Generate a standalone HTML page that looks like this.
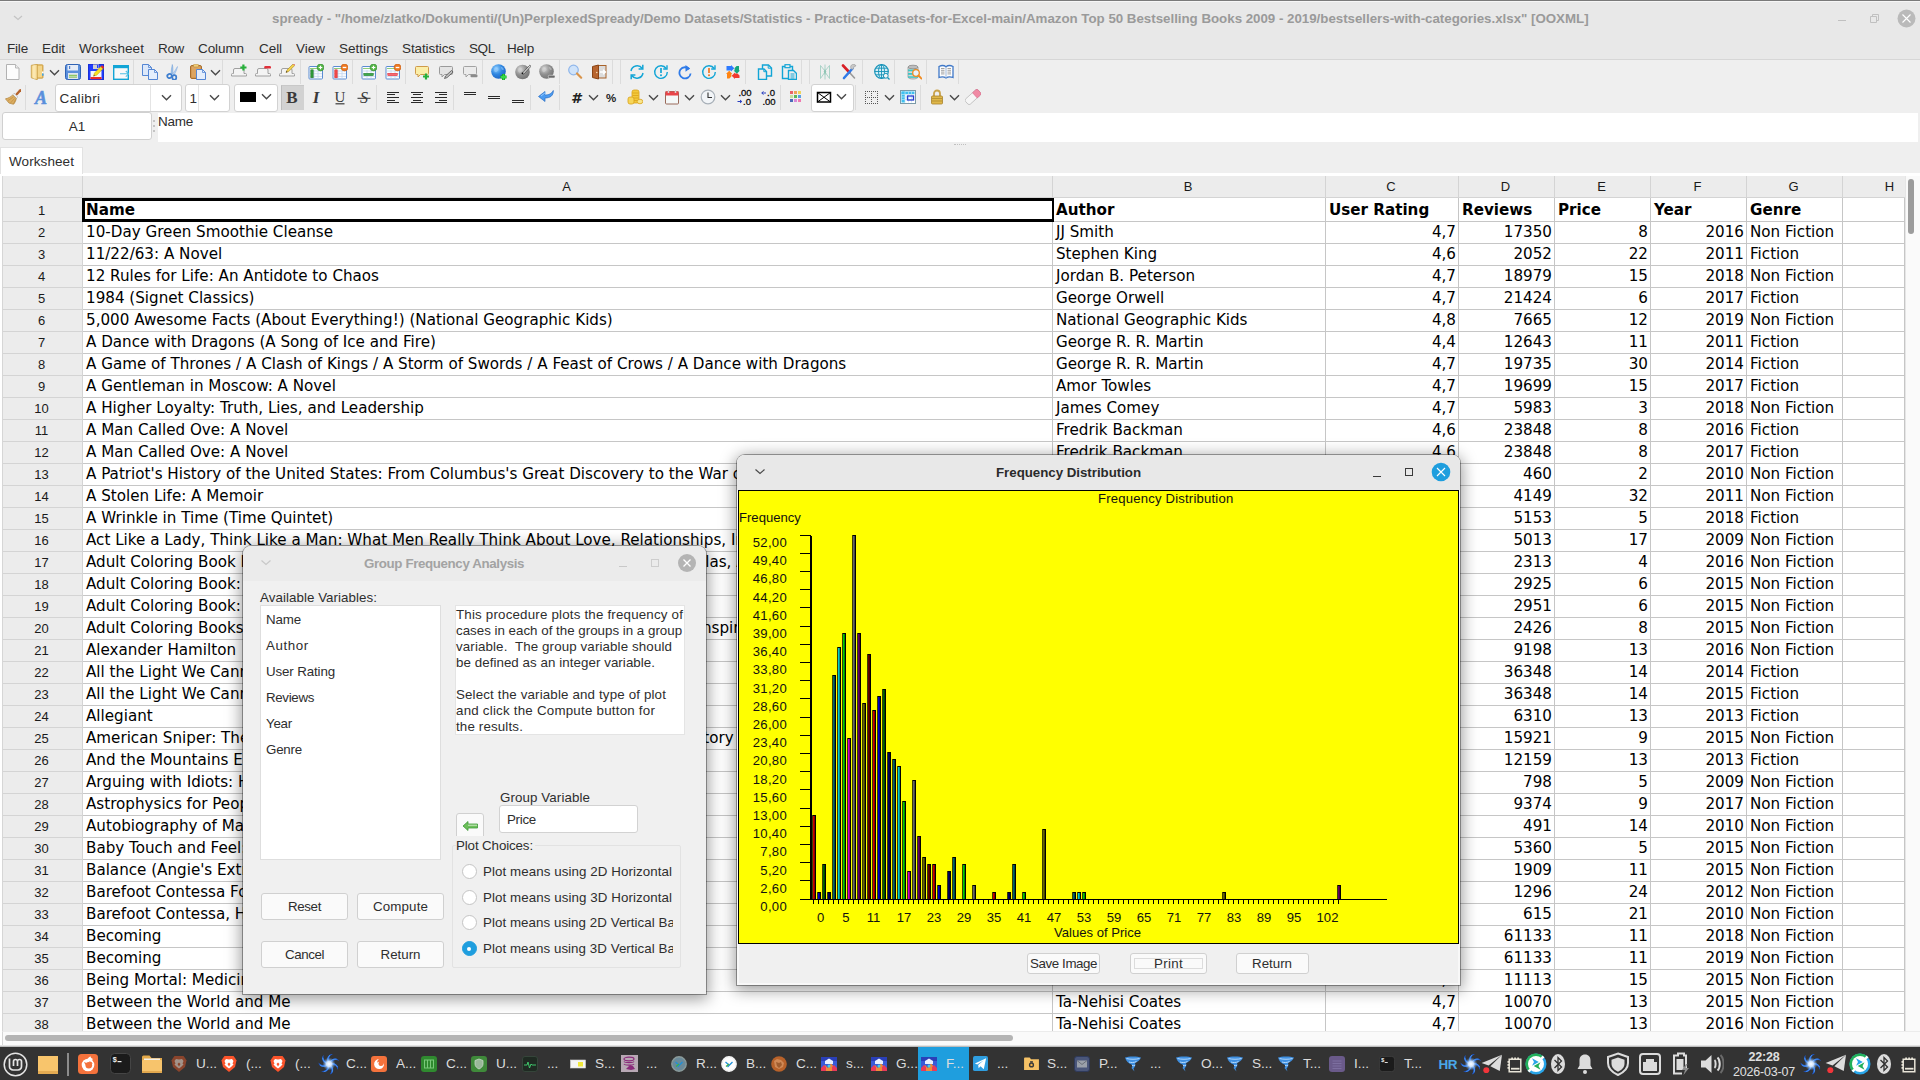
<!DOCTYPE html><html><head><meta charset="utf-8"><title>spready</title><style>*{box-sizing:border-box;margin:0;padding:0}
html,body{width:1920px;height:1080px;overflow:hidden;background:#efefef}
body{font-family:"Liberation Sans",sans-serif;font-size:13px;color:#303030}
#root{position:relative;width:1920px;height:1080px;overflow:hidden;background:#efefef}
.abs{position:absolute}
#titlebar{position:absolute;left:0;top:0;width:1920px;height:60px;background:#e8e8e8;border-top:1px solid #7a7a7a;border-bottom:1px solid #d6d6d6}
#title{position:absolute;left:0;top:9px;width:1860px;text-align:center;font-weight:bold;font-size:13.4px;color:#9b9b9b;white-space:nowrap;letter-spacing:0.12px}
.menu{position:absolute;top:40px;font-size:13.6px;color:#2e2e2e;white-space:nowrap;line-height:16px}
.tsep{position:absolute;width:1px;background:#dcdcdc}
.ico{position:absolute;width:16px;height:16px}
.ico svg{display:block;overflow:visible}
.dd{position:absolute;width:9px;height:6px}
.combo{position:absolute;background:#fff;border:1px solid #d2d2d2;border-radius:3px}
#cellref{position:absolute;left:2px;top:112px;width:150px;height:28px;background:#fff;border:1px solid #d0d0d0;border-radius:3px;text-align:center;line-height:27px;font-size:13.5px;color:#2e2e2e}
#formula{position:absolute;left:158px;top:113px;width:1760px;height:29px;background:#fff;font-size:13.6px;color:#2e2e2e;line-height:16px;padding-top:2px}
#tab{position:absolute;left:0px;top:147px;width:83px;height:27px;background:#fff;border:1px solid #e2e2e2;border-bottom:none;font-size:13.6px;color:#2e2e2e;line-height:24px;padding-left:8px}
#pane{position:absolute;left:0;top:173px;width:1920px;height:874px;background:#fff}
/* grid */
#grid{position:absolute;left:0;top:0;width:1905px;height:1031px;overflow:hidden}
.corner{position:absolute;left:3px;top:176px;width:80px;height:22px;background:#ececec;border-right:1px solid #d4d4d4;border-bottom:1px solid #d4d4d4}
.ch{position:absolute;top:176px;height:22px;background:#ececec;border-right:1px solid #d4d4d4;border-bottom:1px solid #d4d4d4;text-align:center;font-size:13px;line-height:21px;color:#1a1a1a;padding-right:2px}
.rhbg{position:absolute;left:2px;top:176px;width:81px;height:858px;background:#ececec;border-right:1px solid #d4d4d4;border-left:1px solid #d6d6d6}
.rh{position:absolute;left:3px;width:80px;height:23px;border-right:1px solid #d4d4d4;border-bottom:1px solid #d4d4d4;text-align:center;font-size:13px;line-height:24px;color:#1a1a1a;padding-right:2px}
.row{position:absolute;left:83px;width:1822px;height:23px;border-bottom:1px solid #c6c6c6;font-family:"DejaVu Sans","Liberation Sans",sans-serif;font-size:15.15px;color:#000;line-height:22px}
.row.b{font-weight:bold}
.c{position:absolute;top:0;height:22px;margin-left:-83px;padding-left:4px;white-space:nowrap;overflow:visible}
.c.r{text-align:right;padding-left:0;padding-right:2px}
.vl{position:absolute;top:198px;width:1px;height:836px;background:#c6c6c6}
.sel{position:absolute;left:82px;top:198px;width:972px;height:24px;border:3px solid #000;border-right-width:2px;background:transparent}
/* windows */
.win{position:absolute;background:#f0f0f0;border-radius:8px 8px 0 0;box-shadow:0 0 0 1px rgba(0,0,0,0.34),0 3px 16px 2px rgba(0,0,0,0.4)}
.wtitle{position:absolute;left:0;top:0;right:0;height:35px;background:#e8e8e8;border-radius:8px 8px 0 0;text-align:center;font-weight:bold;font-size:13.4px;line-height:34px}
.ct{position:absolute;font-size:13.1px;color:#111;white-space:nowrap;line-height:15px}
.ct.yl{left:739px;width:48px;text-align:right;letter-spacing:0.3px}
.ct.xl{top:910px;width:40px;text-align:center}
.btn{position:absolute;background:#fafafa;border:1px solid #d0d0d0;border-radius:3px;text-align:center;font-size:13.6px;color:#2e2e2e;white-space:nowrap}
.lbl{position:absolute;font-size:13.6px;color:#2e2e2e;white-space:nowrap;line-height:16px}
.radio{position:absolute;width:15px;height:15px;border-radius:50%;background:#fff;border:1px solid #c4c4c4}
.radio.on{background:#1f9ede;border-color:#1f9ede}
.radio.on:after{content:"";position:absolute;left:4.5px;top:4.5px;width:4px;height:4px;border-radius:50%;background:#fff}
/* taskbar */
#taskbar{position:absolute;left:0;top:1047px;width:1920px;height:33px;background:#333333}
.tk{position:absolute;top:0;height:33px}
.tkt{position:absolute;top:8px;font-size:13.6px;color:#dcdcdc;white-space:nowrap;line-height:16px}
#chart{position:absolute;left:739px;top:491px}

#cw{box-shadow:inset 2px 0 0 #f8f8f8,inset -2px 0 0 #f8f8f8,inset 0 -2px 0 #f8f8f8,0 0 0 1px rgba(0,0,0,0.34),0 3px 16px 2px rgba(0,0,0,0.4)}
</style></head><body>
<div id="root">
<svg width="0" height="0" style="position:absolute"><defs><radialGradient id="gb" cx=".35" cy=".3" r=".8"><stop offset="0" stop-color="#8fd0ff"/><stop offset=".5" stop-color="#2f86e0"/><stop offset="1" stop-color="#1a5fc0"/></radialGradient><radialGradient id="gg" cx=".35" cy=".3" r=".8"><stop offset="0" stop-color="#d4d4d4"/><stop offset=".5" stop-color="#909090"/><stop offset="1" stop-color="#6e6e6e"/></radialGradient></defs></svg>
<div id="titlebar"></div><div class="abs" style="left:0;top:1px;width:1920px;height:1px;background:#f6f6f6"></div>
<div style="position:absolute;left:272px;top:10.5px;font-size:13.33px;line-height:16px;color:#9a9a9a;white-space:nowrap;font-weight:bold;letter-spacing:-0.023px;">spready - &quot;/home/zlatko/Dokumenti/(Un)PerplexedSpready/Demo Datasets/Statistics - Practice-Datasets-for-Excel-main/Amazon Top 50 Bestselling Books 2009 - 2019/bestsellers-with-categories.xlsx&quot; [OOXML]</div>
<svg class="abs" style="left:12px;top:14px" width="12" height="8" viewBox="0 0 12 8"><path d="M2 2l4 3.500 4-3.500" fill="none" stroke="#c4c4c4" stroke-width="1.200"/></svg>
<div class="abs" style="left:1838px;top:20px;width:8px;height:1px;background:#c0c0c0"></div>
<svg class="abs" style="left:1870px;top:14px" width="10" height="10" viewBox="0 0 10 10"><path d="M.5 2.500h6v6h-6z M2.500 2.500v-2h6v6h-2" fill="none" stroke="#c0c0c0" stroke-width="1"/></svg>
<svg class="abs" style="left:1896.500px;top:8.500px" width="19" height="19" viewBox="0 0 19 19"><circle cx="9.500" cy="9.500" r="9" fill="#bababa"/><path d="M5.500 5.500l8 8M13.500 5.500l-8 8" stroke="#fff" stroke-width="1.100"/></svg>
<div style="position:absolute;left:7px;top:40.5px;font-size:13.5px;line-height:16px;color:#2e2e2e;white-space:nowrap;letter-spacing:-0.191px;">File</div>
<div style="position:absolute;left:42px;top:40.5px;font-size:13.5px;line-height:16px;color:#2e2e2e;white-space:nowrap;letter-spacing:-0.066px;">Edit</div>
<div style="position:absolute;left:79px;top:40.5px;font-size:13.5px;line-height:16px;color:#2e2e2e;white-space:nowrap;letter-spacing:0.078px;">Worksheet</div>
<div style="position:absolute;left:158px;top:40.5px;font-size:13.5px;line-height:16px;color:#2e2e2e;white-space:nowrap;letter-spacing:-0.339px;">Row</div>
<div style="position:absolute;left:198px;top:40.5px;font-size:13.5px;line-height:16px;color:#2e2e2e;white-space:nowrap;letter-spacing:-0.091px;">Column</div>
<div style="position:absolute;left:259px;top:40.5px;font-size:13.5px;line-height:16px;color:#2e2e2e;white-space:nowrap;letter-spacing:-0.066px;">Cell</div>
<div style="position:absolute;left:296px;top:40.5px;font-size:13.5px;line-height:16px;color:#2e2e2e;white-space:nowrap;letter-spacing:-0.004px;">View</div>
<div style="position:absolute;left:339px;top:40.5px;font-size:13.5px;line-height:16px;color:#2e2e2e;white-space:nowrap;letter-spacing:0.025px;">Settings</div>
<div style="position:absolute;left:402px;top:40.5px;font-size:13.5px;line-height:16px;color:#2e2e2e;white-space:nowrap;letter-spacing:-0.102px;">Statistics</div>
<div style="position:absolute;left:469px;top:40.5px;font-size:13.5px;line-height:16px;color:#2e2e2e;white-space:nowrap;letter-spacing:-0.400px;">SQL</div>
<div style="position:absolute;left:507px;top:40.5px;font-size:13.5px;line-height:16px;color:#2e2e2e;white-space:nowrap;letter-spacing:-0.195px;">Help</div>
<div class="tsep" style="left:133px;top:60px;height:24px"></div>
<div class="tsep" style="left:222px;top:60px;height:24px"></div>
<div class="tsep" style="left:300px;top:60px;height:24px"></div>
<div class="tsep" style="left:352px;top:60px;height:24px"></div>
<div class="tsep" style="left:405px;top:60px;height:24px"></div>
<div class="tsep" style="left:482px;top:60px;height:24px"></div>
<div class="tsep" style="left:559px;top:60px;height:24px"></div>
<div class="tsep" style="left:612px;top:60px;height:24px"></div>
<div class="tsep" style="left:620px;top:60px;height:24px"></div>
<div class="tsep" style="left:745px;top:60px;height:24px"></div>
<div class="tsep" style="left:801px;top:60px;height:24px"></div>
<div class="tsep" style="left:809px;top:60px;height:24px"></div>
<div class="tsep" style="left:862px;top:60px;height:24px"></div>
<div class="tsep" style="left:894px;top:60px;height:24px"></div>
<div class="tsep" style="left:926px;top:60px;height:24px"></div>
<div class="tsep" style="left:958px;top:60px;height:24px"></div>
<div class="tsep" style="left:25px;top:85px;height:25px"></div>
<div class="tsep" style="left:376px;top:85px;height:25px"></div>
<div class="tsep" style="left:453px;top:85px;height:25px"></div>
<div class="tsep" style="left:530px;top:85px;height:25px"></div>
<div class="tsep" style="left:559px;top:85px;height:25px"></div>
<div class="tsep" style="left:780px;top:85px;height:25px"></div>
<div class="tsep" style="left:855px;top:85px;height:25px"></div>
<div class="tsep" style="left:920px;top:85px;height:25px"></div>
<svg class="abs" style="left:5.0px;top:64.0px" width="16" height="16" viewBox="0 0 16 16"><path d="M1.500 .5h9l3.500 3.500v11.500h-12.500z" fill="#fcfcfc" stroke="#b2b2b2"/><path d="M10.500 .5v3.500h3.500" fill="#ececec" stroke="#b2b2b2" stroke-width=".9"/></svg>
<svg class="abs" style="left:29.0px;top:64.0px" width="16" height="16" viewBox="0 0 16 16"><path d="M8 .8h5.200q.8 0 .8.800v11.800q0 .800-.8.800h-5.200z" fill="#e6b85e" stroke="#c79a3e" stroke-width=".8"/><path d="M7 1.800h6v11.500h-6z" fill="#f3d58a"/><path d="M2.300 1.300l6-1v15.400l-6-1.900z" fill="#f7dc98" stroke="#c79a3e" stroke-width=".8"/><path d="M4 1.500l2.500-.4v14l-2.500-.8z" fill="#fbeab8" opacity=".8"/><rect x="13" y="7.500" width="1.600" height="2" fill="#fff"/><rect x="13" y="9.500" width="1.600" height="2.200" fill="#3fa3e8"/></svg>
<svg class="abs" style="left:65.0px;top:64.0px" width="16" height="16" viewBox="0 0 16 16"><rect x=".5" y=".5" width="15" height="15" rx="2" fill="#5a8fdc" stroke="#2f62b4"/><path d="M2.500 1h10.500v5.500h-10.500z" fill="#e6ecf6"/><rect x="4" y="2" width="1.200" height="3" fill="#4f7fcc"/><rect x="3" y="9" width="10" height="6" fill="#dfe6f0"/><rect x="4" y="10.800" width="8" height="1" fill="#7bc043"/><rect x="4" y="12.600" width="8" height="1" fill="#7bc043"/></svg>
<svg class="abs" style="left:88.0px;top:64.0px" width="16" height="16" viewBox="0 0 16 16"><rect x=".5" y=".5" width="15" height="15" fill="#1f3dff" stroke="#1a30d8"/><rect x="5" y=".5" width="6" height="4.500" fill="#cfcfcf"/><rect x="9" y="1" width="1.500" height="3" fill="#1f3dff"/><rect x="2.500" y="7" width="11" height="8" fill="#f8f8f8"/><rect x="2.500" y="13" width="11" height="2.200" fill="#ee2a2a"/><path d="M5.500 12.200l1-3.200 6.300-6.500 2.200 2.200-6.300 6.500z" fill="#f8e020" stroke="#b89a10" stroke-width=".5"/><path d="M12.800 2.500l1.300-1.300 2.200 2.200-1.300 1.300z" fill="#e8232a"/><path d="M5.500 12.200l.5-1.600 1.100 1.100z" fill="#7a5a3a"/></svg>
<svg class="abs" style="left:113.0px;top:64.0px" width="16" height="16" viewBox="0 0 16 16"><rect x=".7" y="1.700" width="14.600" height="13.600" fill="#f9f9f9" stroke="#12a5d6" stroke-width="1.400"/><rect x="0" y="1" width="16" height="3.200" fill="#12a5d6"/><path d="M7 9.800h8.500M12.800 7l3 2.800-3 2.800" fill="none" stroke="#4fc0e4" stroke-width="1.100"/></svg>
<svg class="abs" style="left:142.0px;top:64.0px" width="16" height="16" viewBox="0 0 16 16"><path d="M.5.5h6l3 3v8h-9z" fill="#dce8fa" stroke="#5486d4"/><path d="M6.500 .5v3h3" fill="none" stroke="#5486d4" stroke-width=".8"/><path d="M6.500 5.500h6l3 3v7h-9z" fill="#e4eefc" stroke="#5486d4"/><path d="M12.500 5.500v3h3" fill="none" stroke="#5486d4" stroke-width=".8"/></svg>
<svg class="abs" style="left:165.0px;top:64.0px" width="16" height="16" viewBox="0 0 16 16"><path d="M7.300 .5c.8 3 .8 6 .2 9.500l-1.500-.5c.3-3 .5-6 1.300-9z" fill="#9ec3ea" stroke="#6f9fd8" stroke-width=".5"/><path d="M12.500 2.500c-1.500 2.500-3 5-5 7.500l1.500 1c1.500-2.500 3-5.500 3.500-8.500z" fill="#b9d3f0" stroke="#7fa8dc" stroke-width=".5"/><ellipse cx="4.500" cy="12" rx="2.300" ry="2" fill="none" stroke="#3f7fcf" stroke-width="1.700" transform="rotate(-20 4.500 12)"/><ellipse cx="9.300" cy="13.500" rx="2" ry="2.300" fill="none" stroke="#3f7fcf" stroke-width="1.700"/></svg>
<svg class="abs" style="left:190.0px;top:64.0px" width="16" height="16" viewBox="0 0 16 16"><rect x=".5" y="1.500" width="11" height="13" rx="1.500" fill="#d39a55" stroke="#a86e2c"/><rect x="2" y="3" width="8" height="10" fill="#e2ad6a" opacity=".6"/><rect x="3.500" y=".3" width="5" height="2.700" rx=".8" fill="#f0cf7a" stroke="#b88a3a" stroke-width=".6"/><path d="M6.500 5.500h6l3 3v7h-9z" fill="#e4eefc" stroke="#5486d4"/><path d="M12.500 5.500v3h3" fill="none" stroke="#5486d4" stroke-width=".8"/></svg>
<svg class="abs" style="left:231.0px;top:64.0px" width="16" height="16" viewBox="0 0 16 16"><path d="M2.500 6q0-1.500 1.500-1.500h7.500q1.500 0 1.500 1.500v3.500h1.500q1 0 1 1v1.500h-15v-1.500q0-1 1-1h1z" fill="#f4f4f4" stroke="#a0a0a0"/><path d="M9.300 3.500h6.200M12.400 .4v6.200" stroke="#27b03a" stroke-width="2.200"/></svg>
<svg class="abs" style="left:255.0px;top:64.0px" width="16" height="16" viewBox="0 0 16 16"><path d="M2.500 6q0-1.500 1.500-1.500h7.500q1.500 0 1.500 1.500v3.500h1.500q1 0 1 1v1.500h-15v-1.500q0-1 1-1h1z" fill="#f4f4f4" stroke="#a0a0a0"/><rect x="9.200" y="2" width="6.800" height="2.600" rx="1.200" fill="#e0303a"/></svg>
<svg class="abs" style="left:279.0px;top:64.0px" width="16" height="16" viewBox="0 0 16 16"><path d="M2.500 6q0-1.500 1.500-1.500h7.500q1.500 0 1.500 1.500v3.500h1.500q1 0 1 1v1.500h-15v-1.500q0-1 1-1h1z" fill="#f4f4f4" stroke="#a0a0a0"/><path d="M7 8.500l1-2.500 6-6 1.600 1.600-6 6z" fill="#f2d24a" stroke="#a8862b" stroke-width=".6"/><path d="M14 0l.8-.8 1.600 1.600-.8.8z" fill="#e87a7a"/><path d="M7 8.500l.6-1.400.9.900z" fill="#222"/></svg>
<svg class="abs" style="left:308.0px;top:64.0px" width="16" height="16" viewBox="0 0 16 16"><rect x="1" y="2.500" width="13.500" height="12.500" rx=".8" fill="#fbfdff" stroke="#5a8cd2"/><path d="M2 4.500h11" stroke="#8fce7a" stroke-width="1"/><path d="M1.500 7h12.500M1.500 9.700h12.500M1.500 12.400h12.500M6 6v8.500M10 6v8.500" stroke="#c4d6ee" stroke-width=".8"/><rect x="2.800" y="5.800" width="2.400" height="8" fill="#2f9a3a" stroke="#1f6a2a" stroke-width=".5"/><circle cx="12.5" cy="3.5" r="3.4" fill="#5ab84a" stroke="#2f8a2f" stroke-width=".6"/><path d="M10.7 3.5h3.6M12.5 1.7v3.6" stroke="#fff" stroke-width="1.2"/></svg>
<svg class="abs" style="left:332.0px;top:64.0px" width="16" height="16" viewBox="0 0 16 16"><rect x="1" y="2.500" width="13.500" height="12.500" rx=".8" fill="#fbfdff" stroke="#5a8cd2"/><path d="M2 4.500h11" stroke="#8fce7a" stroke-width="1"/><path d="M1.500 7h12.500M1.500 9.700h12.500M1.500 12.400h12.500M6 6v8.500M10 6v8.500" stroke="#c4d6ee" stroke-width=".8"/><rect x="2.800" y="5.800" width="2.400" height="8" fill="#f04a4a" stroke="#d81f26" stroke-width=".5"/><circle cx="12.5" cy="3.5" r="3.4" fill="#ef7a22" stroke="#c25a10" stroke-width=".6"/><path d="M10.7 3.5h3.6" stroke="#fff" stroke-width="1.3"/></svg>
<svg class="abs" style="left:361.0px;top:64.0px" width="16" height="16" viewBox="0 0 16 16"><rect x="1" y="2.500" width="13.500" height="12.500" rx=".8" fill="#fbfdff" stroke="#5a8cd2"/><path d="M2 4.500h11" stroke="#8fce7a" stroke-width="1"/><path d="M1.500 7h12.500M1.500 9.700h12.500M1.500 12.400h12.500M6 6v8.500M10 6v8.500" stroke="#c4d6ee" stroke-width=".8"/><rect x="2.800" y="9.300" width="9.500" height="2.400" fill="#3fa84a" stroke="#1f7a2a" stroke-width=".5"/><circle cx="12.5" cy="3.5" r="3.4" fill="#5ab84a" stroke="#2f8a2f" stroke-width=".6"/><path d="M10.7 3.5h3.6M12.5 1.7v3.6" stroke="#fff" stroke-width="1.2"/></svg>
<svg class="abs" style="left:385.0px;top:64.0px" width="16" height="16" viewBox="0 0 16 16"><rect x="1" y="2.500" width="13.500" height="12.500" rx=".8" fill="#fbfdff" stroke="#5a8cd2"/><path d="M2 4.500h11" stroke="#8fce7a" stroke-width="1"/><path d="M1.500 7h12.500M1.500 9.700h12.500M1.500 12.400h12.500M6 6v8.500M10 6v8.500" stroke="#c4d6ee" stroke-width=".8"/><rect x="2.800" y="9.300" width="9.500" height="2.400" fill="#f46a72" stroke="#e8232a" stroke-width=".5"/><circle cx="12.5" cy="3.5" r="3.4" fill="#ef7a22" stroke="#c25a10" stroke-width=".6"/><path d="M10.7 3.5h3.6" stroke="#fff" stroke-width="1.3"/></svg>
<svg class="abs" style="left:414.0px;top:64.0px" width="16" height="16" viewBox="0 0 16 16"><path d="M2.5 2.5h11a1 1 0 0 1 1 1v6a1 1 0 0 1-1 1h-7l-2.5 2.5v-2.5h-1.5a1 1 0 0 1-1-1v-6a1 1 0 0 1 1-1z" fill="#fbeea8" stroke="#cf9a4a"/><path d="M9 12.5h6M12 9.5v6" stroke="#27b03a" stroke-width="2.2"/></svg>
<svg class="abs" style="left:438.0px;top:64.0px" width="16" height="16" viewBox="0 0 16 16"><path d="M2.5 2.5h11a1 1 0 0 1 1 1v6a1 1 0 0 1-1 1h-7l-2.5 2.5v-2.5h-1.5a1 1 0 0 1-1-1v-6a1 1 0 0 1 1-1z" fill="#e4e4e4" stroke="#9a9a9a"/><path d="M6.5 14.5l1-2.5 6-5.5 1.6 1.6-6 5.5z" fill="#bdbdbd" stroke="#444" stroke-width=".7"/></svg>
<svg class="abs" style="left:462.0px;top:64.0px" width="16" height="16" viewBox="0 0 16 16"><path d="M2.5 2.5h11a1 1 0 0 1 1 1v6a1 1 0 0 1-1 1h-7l-2.5 2.5v-2.5h-1.5a1 1 0 0 1-1-1v-6a1 1 0 0 1 1-1z" fill="#ebebeb" stroke="#a2a2a2"/><rect x="8.5" y="10.5" width="7" height="2.8" rx="1" fill="#8a8a8a"/></svg>
<svg class="abs" style="left:491.0px;top:64.0px" width="16" height="16" viewBox="0 0 16 16"><circle cx="7.500" cy="7.500" r="7.300" fill="url(#gb)"/><path d="M4 3.500c1.500-1 3 0 3.500 1.500s-1 2-2 3-2.500-.5-2.500-2 .3-2 1-2.500zM9.500 2.500c1.500.3 3 1.500 3.500 3l-2 .5z" fill="#9fd0ff" opacity=".55"/><path d="M9.500 13h6M12.500 10v6" stroke="#0f9a1f" stroke-width="3"/><path d="M9.800 13h5.400M12.500 10.300v5.400" stroke="#35d845" stroke-width="1.800"/></svg>
<svg class="abs" style="left:514.5px;top:64.0px" width="16" height="16" viewBox="0 0 16 16"><circle cx="7.500" cy="8" r="7.300" fill="url(#gg)"/><path d="M4 4c1.500-1 3 0 3.500 1.500s-1 2-2 3-2.500-.5-2.500-2 .3-2 1-2.500z" fill="#d8d8d8" opacity=".45"/><path d="M7.300 9.200l7.500-8 1.200 1.100-7.500 8z" fill="#e4e4e4" stroke="#3a3a3a" stroke-width=".7"/><circle cx="7.500" cy="9.300" r=".9" fill="#111"/></svg>
<svg class="abs" style="left:538.5px;top:64.0px" width="16" height="16" viewBox="0 0 16 16"><circle cx="7.500" cy="7.500" r="7.300" fill="url(#gg)"/><path d="M4 3.500c1.500-1 3 0 3.500 1.500s-1 2-2 3-2.500-.5-2.500-2 .3-2 1-2.500zM9.500 2.500c1.500.3 3 1.500 3.500 3l-2 .5z" fill="#d8d8d8" opacity=".45"/><rect x="9.300" y="11.300" width="6.700" height="2.700" rx="1" fill="#6a6a6a" stroke="#e4e4e4" stroke-width=".6"/></svg>
<svg class="abs" style="left:567.0px;top:64.0px" width="16" height="16" viewBox="0 0 16 16"><circle cx="6.5" cy="6" r="4.8" fill="#cfe3fa" stroke="#8fb6ea" stroke-width="1.2"/><path d="M10 9.5l4.2 4.2" stroke="#d9944a" stroke-width="2.2" stroke-linecap="round"/></svg>
<svg class="abs" style="left:591.0px;top:64.0px" width="16" height="16" viewBox="0 0 16 16"><rect x="6" y="1.5" width="9" height="12.5" fill="#dcdcdc" stroke="#a8622a"/><path d="M1.5 2.5l6-1.5v14l-6-1.5z" fill="#b8652f" stroke="#8a4516"/><circle cx="5.8" cy="8.5" r=".8" fill="#f3d9b0"/><path d="M9 8h5M12 5.8l2.5 2.2-2.5 2.2" stroke="#fff" stroke-width="1.3" fill="none"/></svg>
<svg class="abs" style="left:629.0px;top:64.0px" width="16" height="16" viewBox="0 0 16 16"><path d="M2 7A6.200 6.200 0 0 1 13.200 4.500M14 9A6.200 6.200 0 0 1 2.800 11.500" fill="none" stroke="#12a5d6" stroke-width="1.500"/><path d="M13.800 .8v4.200h-4.200M2.200 15.200v-4.200h4.200" fill="none" stroke="#12a5d6" stroke-width="1.500"/></svg>
<svg class="abs" style="left:653.0px;top:64.0px" width="16" height="16" viewBox="0 0 16 16"><path d="M13.2 4.5A6.3 6.3 0 1 0 14.3 8" fill="none" stroke="#12a5d6" stroke-width="1.4"/><path d="M14 1.2v3.8h-3.8" fill="none" stroke="#12a5d6" stroke-width="1.4"/><path d="M8 4v5" stroke="#12a5d6" stroke-width="1.7"/><circle cx="8" cy="11.3" r="1" fill="#12a5d6"/></svg>
<svg class="abs" style="left:677.0px;top:64.0px" width="16" height="16" viewBox="0 0 16 16"><path d="M12.3 5.2A5.6 5.6 0 1 0 13.6 9.5" fill="none" stroke="#2f7be8" stroke-width="1.8"/><path d="M8.5 1l4.5 3.5-4.5 3.2z" fill="#2f7be8"/></svg>
<svg class="abs" style="left:701.0px;top:64.0px" width="16" height="16" viewBox="0 0 16 16"><path d="M13.2 4.5A6.3 6.3 0 1 0 14.3 8" fill="none" stroke="#12a5d6" stroke-width="1.4"/><path d="M14 1.2v3.8h-3.8" fill="none" stroke="#12a5d6" stroke-width="1.4"/><path d="M8 4v5" stroke="#f0761f" stroke-width="1.7"/><circle cx="8" cy="11.3" r="1" fill="#f0761f"/></svg>
<svg class="abs" style="left:725.0px;top:64.0px" width="16" height="16" viewBox="0 0 16 16"><path d="M1.500 2h4.500v-1l3.300 3.200-3.300 3.200v-1h-4.500z" fill="#2e7bff"/><path d="M14 2v4.500h1l-3.200 3.300-3.200-3.300h1v-2.500l2-2z" fill="#14a67c"/><path d="M14.500 14h-4.500v1l-3.300-3.200 3.300-3.200v1h2.500l2 2z" fill="#f23a2e"/><path d="M2 14.500v-4.500h-1l3.200-3.300 3.200 3.300h-1v2.500l-2 2z" fill="#ff8412"/></svg>
<svg class="abs" style="left:757.0px;top:64.0px" width="16" height="16" viewBox="0 0 16 16"><path d="M5.500 1h6l3 3v8h-9z" fill="none" stroke="#12a5d6" stroke-width="1.400"/><path d="M11.200 1.200v3h3" fill="none" stroke="#12a5d6" stroke-width="1"/><path d="M1.500 5h5.500l2.500 2.500v8h-8z" fill="#efefef" stroke="#12a5d6" stroke-width="1.400"/><path d="M6.800 5.200v2.500h2.500" fill="none" stroke="#12a5d6" stroke-width="1"/></svg>
<svg class="abs" style="left:781.0px;top:64.0px" width="16" height="16" viewBox="0 0 16 16"><path d="M7.500 14.500h-6v-12h10v4" fill="none" stroke="#12a5d6" stroke-width="1.400"/><rect x="4" y=".7" width="5" height="3" fill="#efefef" stroke="#12a5d6" stroke-width="1.200"/><path d="M7.500 6.500h5l3 3v6h-8z" fill="#efefef" stroke="#12a5d6" stroke-width="1.400"/><path d="M9.500 10h4M9.500 12h4M9.500 14h4" stroke="#12a5d6" stroke-width="1.100"/></svg>
<svg class="abs" style="left:817.0px;top:64.0px" width="16" height="16" viewBox="0 0 16 16"><path d="M8 .5v15M3.500 1.500l4.500 5.500 4.500-5.500M3.500 14.500l4.500-6.500 4.500 6.500M3.500 1.500v13M12.500 1.500v13" fill="none" stroke="#9accbe" stroke-width=".8"/><path d="M8 5l1.200 2.500-1.200 4-1.200-4z" fill="#8fc4b4"/></svg>
<svg class="abs" style="left:841.0px;top:64.0px" width="16" height="16" viewBox="0 0 16 16"><path d="M2 1.5l6.5 7" stroke="#d81f26" stroke-width="2.6" stroke-linecap="round"/><path d="M8.5 8.5l5 5.5" stroke="#9a9a9a" stroke-width="1.6" stroke-linecap="round"/><path d="M3 14l8.5-9.5" stroke="#2f7be8" stroke-width="2.6" stroke-linecap="round"/><path d="M11 5.5a2.8 2.8 0 1 1 4-3.5l-2 .5-.5 2z" fill="#c8c8c8" stroke="#9a9a9a" stroke-width=".6"/></svg>
<svg class="abs" style="left:873.5px;top:64.0px" width="16" height="16" viewBox="0 0 16 16"><circle cx="7.500" cy="7.500" r="6.800" fill="#d4eef6" stroke="#1592b8" stroke-width="1.200"/><ellipse cx="7.500" cy="7.500" rx="3" ry="6.800" fill="none" stroke="#1592b8" stroke-width=".9"/><path d="M.8 7.500h13.400M2 4.200h11M2 10.800h11M7.500 .8v13.400" stroke="#1592b8" stroke-width=".9"/><circle cx="11.800" cy="11.800" r="2.400" fill="#f4f4f4" stroke="#1592b8" stroke-width="1"/><path d="M13.500 13.500l2 2" stroke="#1592b8" stroke-width="1.300"/></svg>
<svg class="abs" style="left:906.0px;top:64.0px" width="16" height="16" viewBox="0 0 16 16"><path d="M2 3v10c0 1.3 2.4 2 5 2s5-.7 5-2V3" fill="#d8d8d8" stroke="#9a9a9a" stroke-width=".8"/><ellipse cx="7" cy="3" rx="5" ry="1.8" fill="#bdbdbd" stroke="#8a8a8a" stroke-width=".8"/><rect x="2" y="5.5" width="10" height="1.8" fill="#3cc5c5"/><rect x="2" y="9" width="10" height="1.8" fill="#3cc5c5"/><rect x="2" y="12.3" width="10" height="1.5" fill="#3cc5c5"/><circle cx="10" cy="9" r="3.3" fill="#e9f2fb" stroke="#f08a1f" stroke-width="1.3"/><path d="M12.5 11.5l3 3" stroke="#f08a1f" stroke-width="1.8" stroke-linecap="round"/></svg>
<svg class="abs" style="left:938.0px;top:64.0px" width="16" height="16" viewBox="0 0 16 16"><path d="M1 2.500c2.500-1.300 5-1.300 7 .3 2-1.600 4.500-1.600 7-.3v11c-2.500-1-5-1-7 .5-2-1.500-4.500-1.500-7-.5z" fill="#fdfdfd" stroke="#3f78c8" stroke-width="1.300"/><path d="M8 2.800v11.200" stroke="#9db6d8" stroke-width="1"/><path d="M3 4.500h3.500M3 6.300h3.500M3 8.100h3.500M3 9.900h3.500M9.500 4.500h3.500M9.500 6.300h3.500M9.500 8.100h3.500M9.500 9.900h3.500" stroke="#8a8a8a" stroke-width=".8"/></svg>
<svg class="abs" style="left:49.0px;top:69.0px" width="11" height="8" viewBox="0 0 11 8"><path d="M1 1.200l4.500 4.500 4.500-4.500" fill="none" stroke="#484848" stroke-width="1.400"/></svg>
<svg class="abs" style="left:210.0px;top:69.0px" width="11" height="8" viewBox="0 0 11 8"><path d="M1 1.200l4.500 4.500 4.500-4.500" fill="none" stroke="#484848" stroke-width="1.400"/></svg>
<svg class="abs" style="left:5.0px;top:89.0px" width="16" height="16" viewBox="0 0 16 16"><path d="M15.300 1.300l-3.600 3.900" stroke="#b5622a" stroke-width="2.400" stroke-linecap="round"/><path d="M9.300 4.300l3.600 3.600-1.600 1.600-3.600-3.600z" fill="#ececec" stroke="#777" stroke-width=".5" stroke-dasharray=".8 .6"/><path d="M7.700 5.900l3.600 3.600c-.3 2-1.300 4.300-2.800 5.800l-4.500-1.200-3.600-4.300c2.800-.5 5.300-1.900 7.300-3.900z" fill="#dcae62" stroke="#a8782e" stroke-width=".6"/><path d="M8.500 8l-5.500 3.500M9.500 9.500l-4 4.500M10.500 10.500l-2 4.500" stroke="#b8863a" stroke-width=".6" fill="none"/></svg>
<svg class="abs" style="left:33.0px;top:89.0px" width="16" height="16" viewBox="0 0 16 16"><text x="8" y="14.500" font-family="Liberation Serif,serif" font-size="18" font-style="italic" font-weight="bold" text-anchor="middle" fill="#5a8fdc" stroke="#5a8fdc" stroke-width=".5">A</text></svg>
<div class="combo" style="left:55px;top:84px;width:127px;height:28px"><div class="abs" style="left:94px;top:0;width:1px;height:26px;background:#e4e4e4"></div></div>
<div style="position:absolute;left:59.5px;top:91.0px;font-size:13.5px;line-height:16px;color:#2e2e2e;white-space:nowrap;letter-spacing:0.388px;">Calibri</div>
<svg class="abs" style="left:161.0px;top:94.0px" width="11" height="8" viewBox="0 0 11 8"><path d="M1 1.200l4.500 4.500 4.500-4.500" fill="none" stroke="#484848" stroke-width="1.400"/></svg>
<div class="combo" style="left:185px;top:84px;width:45px;height:28px"><div class="abs" style="left:12px;top:0;width:1px;height:26px;background:#e4e4e4"></div></div>
<div style="position:absolute;left:189.5px;top:91.0px;font-size:13.5px;line-height:16px;color:#2e2e2e;white-space:nowrap;">1</div>
<svg class="abs" style="left:209.0px;top:94.0px" width="11" height="8" viewBox="0 0 11 8"><path d="M1 1.200l4.500 4.500 4.500-4.500" fill="none" stroke="#484848" stroke-width="1.400"/></svg>
<div class="combo" style="left:234px;top:84px;width:44px;height:28px"></div>
<div class="abs" style="left:240px;top:92px;width:16px;height:10px;background:#000"></div>
<svg class="abs" style="left:261.0px;top:93.0px" width="11" height="8" viewBox="0 0 11 8"><path d="M1 1.200l4.500 4.500 4.500-4.500" fill="none" stroke="#484848" stroke-width="1.400"/></svg>
<div class="abs" style="left:281px;top:85px;width:23px;height:25px;background:#d2d2d2;border-left:1px solid #bdbdbd;border-top:1px solid #c8c8c8"></div>
<svg class="abs" style="left:284.0px;top:89.0px" width="16" height="16" viewBox="0 0 16 16"><text x="8" y="14" font-family="Liberation Serif,serif" font-size="17" font-weight="bold" text-anchor="middle" fill="#3a3a3a">B</text></svg>
<svg class="abs" style="left:308.0px;top:89.0px" width="16" height="16" viewBox="0 0 16 16"><text x="8" y="14" font-family="Liberation Serif,serif" font-size="17" font-style="italic" font-weight="bold" text-anchor="middle" fill="#3a3a3a">I</text></svg>
<svg class="abs" style="left:332.0px;top:89.0px" width="16" height="16" viewBox="0 0 16 16"><text x="8" y="12.500" font-family="Liberation Serif,serif" font-size="15" text-anchor="middle" fill="#3a3a3a">U</text><path d="M3.500 14.800h9" stroke="#3a3a3a" stroke-width="1.200"/></svg>
<svg class="abs" style="left:356.0px;top:89.0px" width="16" height="16" viewBox="0 0 16 16"><text x="8" y="14" font-family="Liberation Serif,serif" font-size="16" font-style="italic" text-anchor="middle" fill="#3a3a3a">S</text><path d="M1.500 9.300h13" stroke="#3a3a3a" stroke-width="1.100"/></svg>
<svg class="abs" style="left:385.0px;top:89.0px" width="16" height="16" viewBox="0 0 16 16"><path d="M2 3.5h12M2 5.5h8M2 8.5h12M2 11.5h8M2 13.5h12" stroke="#2a2a2a" stroke-width="1" shape-rendering="crispEdges"/></svg>
<svg class="abs" style="left:409.0px;top:89.0px" width="16" height="16" viewBox="0 0 16 16"><path d="M2 3.5h12M4 5.5h8M2 8.5h12M4 11.5h8M2 13.5h12" stroke="#2a2a2a" stroke-width="1" shape-rendering="crispEdges"/></svg>
<svg class="abs" style="left:433.0px;top:89.0px" width="16" height="16" viewBox="0 0 16 16"><path d="M2 3.5h12M6 5.5h8M2 8.5h12M6 11.5h8M2 13.5h12" stroke="#2a2a2a" stroke-width="1" shape-rendering="crispEdges"/></svg>
<svg class="abs" style="left:462.0px;top:89.0px" width="16" height="16" viewBox="0 0 16 16"><path d="M2 3.500h12M2 5.500h12" stroke="#2a2a2a" stroke-width="1" shape-rendering="crispEdges"/></svg>
<svg class="abs" style="left:486.0px;top:89.0px" width="16" height="16" viewBox="0 0 16 16"><path d="M2 7.500h12M2 9.500h12" stroke="#2a2a2a" stroke-width="1" shape-rendering="crispEdges"/></svg>
<svg class="abs" style="left:510.0px;top:89.0px" width="16" height="16" viewBox="0 0 16 16"><path d="M2 11.500h12M2 13.500h12" stroke="#2a2a2a" stroke-width="1" shape-rendering="crispEdges"/></svg>
<svg class="abs" style="left:538.0px;top:89.0px" width="16" height="16" viewBox="0 0 16 16"><path d="M15.300 1.500c.3 5-3 7.500-8.300 7.500v3.500l-6.500-5 6.500-5v3.500c3.500 0 6.300-1 8.300-4.500z" fill="#4a9af0" stroke="#2a6fc4" stroke-width=".7"/><path d="M7.500 5.500v-2l-4.500 3.500" fill="none" stroke="#9fd0ff" stroke-width=".9"/></svg>
<svg class="abs" style="left:567.5px;top:89.0px" width="16" height="16" viewBox="0 0 16 16"><text x="8" y="13.500" font-family="DejaVu Sans,Liberation Sans,sans-serif" font-size="14.500" font-style="italic" font-weight="bold" text-anchor="middle" fill="#222">#</text></svg>
<svg class="abs" style="left:603.0px;top:89.0px" width="16" height="16" viewBox="0 0 16 16"><text x="8" y="12.500" font-family="Liberation Sans,sans-serif" font-size="11.500" font-weight="bold" text-anchor="middle" fill="#222">%</text></svg>
<svg class="abs" style="left:627.0px;top:89.0px" width="16" height="16" viewBox="0 0 16 16"><rect x="5" y="1" width="7" height="13" rx="2" fill="#f3c93a" stroke="#d9a21a" stroke-width=".8"/><path d="M5.500 4h6M5.500 6.500h6M5.500 9h6M5.500 11.500h6" stroke="#d9a21a" stroke-width=".8"/><rect x="1" y="8" width="6" height="7" rx="2" fill="#f7d659" stroke="#d9a21a" stroke-width=".8"/><ellipse cx="13" cy="12.500" rx="2.800" ry="2.300" fill="#f9e58a" stroke="#d9a21a" stroke-width=".8"/></svg>
<svg class="abs" style="left:663.5px;top:89.0px" width="16" height="16" viewBox="0 0 16 16"><rect x="1.500" y="2.500" width="13" height="12.500" rx="1" fill="#f4f8f8" stroke="#9a6a5a"/><rect x="1.500" y="2.500" width="13" height="4" fill="#e8454a"/><path d="M4.500 1v3M11.500 1v3" stroke="#fff" stroke-width="1.400"/><path d="M4.500 1v3M11.500 1v3" stroke="#b8b8b8" stroke-width=".6"/></svg>
<svg class="abs" style="left:700.0px;top:89.0px" width="16" height="16" viewBox="0 0 16 16"><circle cx="8" cy="8" r="6.800" fill="#f2f5f8" stroke="#a8b0b8" stroke-width="1.200"/><path d="M8 3.500v5h4" fill="none" stroke="#333" stroke-width="1.100"/></svg>
<svg class="abs" style="left:736.0px;top:89.0px" width="16" height="16" viewBox="0 0 16 16"><text x="9" y="7" font-family="Liberation Sans,sans-serif" font-size="9.500" text-anchor="middle" fill="#111" stroke="#111" stroke-width=".3">.00</text><text x="11" y="15.500" font-family="Liberation Sans,sans-serif" font-size="9.500" text-anchor="middle" fill="#111" stroke="#111" stroke-width=".3">.0</text><path d="M1.500 12.500h4M4 11l1.800 1.500-1.800 1.500" stroke="#2a3fbf" stroke-width="1" fill="none"/></svg>
<svg class="abs" style="left:760.0px;top:89.0px" width="16" height="16" viewBox="0 0 16 16"><text x="11" y="7" font-family="Liberation Sans,sans-serif" font-size="9.500" text-anchor="middle" fill="#111" stroke="#111" stroke-width=".3">.0</text><text x="9" y="15.500" font-family="Liberation Sans,sans-serif" font-size="9.500" text-anchor="middle" fill="#111" stroke="#111" stroke-width=".3">.00</text><path d="M2 4h4M3.500 2.500l-1.800 1.500 1.800 1.500" stroke="#2a3fbf" stroke-width="1" fill="none"/></svg>
<svg class="abs" style="left:788.0px;top:89.0px" width="16" height="16" viewBox="0 0 16 16"><g shape-rendering="crispEdges"><rect x="2" y="2" width="3" height="3" fill="#e8636a"/><rect x="6" y="2" width="3" height="3" fill="#f0a25a"/><rect x="10" y="2" width="3" height="3" fill="#f0d45a"/><rect x="2" y="6" width="3" height="3" fill="#c6e0a0"/><rect x="6" y="6" width="3" height="3" fill="#5ab85a"/><rect x="10" y="6" width="3" height="3" fill="#5aa0e0"/><rect x="2" y="10" width="3" height="3" fill="#4a6ab8"/><rect x="6" y="10" width="3" height="3" fill="#d88ad8"/><rect x="10" y="10" width="3" height="3" fill="#f07ab0"/></g></svg>
<svg class="abs" style="left:863.0px;top:89.0px" width="16" height="16" viewBox="0 0 16 16"><g shape-rendering="crispEdges" stroke="#555" stroke-width="1" stroke-dasharray="1 1" fill="none"><path d="M2 2.500h13M2 8.500h13M2 14.500h13M2.500 2v13M8.500 2v13M14.500 2v13"/></g></svg>
<svg class="abs" style="left:900.0px;top:89.0px" width="16" height="16" viewBox="0 0 16 16"><rect x=".5" y="1.500" width="15" height="13" fill="#fff" stroke="#7a9aa8" stroke-width="1"/><rect x="1.500" y="2.500" width="13" height="2.500" fill="#3fc0f0"/><rect x="1.500" y="2.500" width="3.500" height="11" fill="#3fc0f0"/><path d="M1.500 5.500h13M1.500 8h13M1.500 10.500h13M5 2.500v11M8.500 2.500v11M11.500 2.500v11" stroke="#bfe4f4" stroke-width=".7"/><rect x="7.500" y="7" width="6" height="4" fill="none" stroke="#2a3fcf" stroke-width="1.300"/></svg>
<svg class="abs" style="left:929.0px;top:89.0px" width="16" height="16" viewBox="0 0 16 16"><path d="M5 7v-2.500a3 3 0 0 1 6 0v2.500" fill="none" stroke="#c9a24a" stroke-width="1.800"/><rect x="2.500" y="7" width="11" height="8" rx="1" fill="#e0b84a" stroke="#a8822a" stroke-width=".8"/><path d="M3 9.500h10M3 12h10" stroke="#a8822a" stroke-width=".7"/></svg>
<svg class="abs" style="left:965.0px;top:89.0px" width="16" height="16" viewBox="0 0 16 16"><g transform="rotate(-42 8 8)"><rect x="-.5" y="4.500" width="17" height="7" rx="1.800" fill="#f6f6f6" stroke="#bcbcbc" stroke-width=".8"/><path d="M10.500 4.500h4.200a1.800 1.800 0 0 1 1.800 1.800v3.400a1.800 1.800 0 0 1-1.800 1.800h-4.200z" fill="#f08aa4" stroke="#dc6c8c" stroke-width=".6"/></g></svg>
<svg class="abs" style="left:587.5px;top:94.0px" width="11" height="8" viewBox="0 0 11 8"><path d="M1 1.200l4.500 4.500 4.500-4.500" fill="none" stroke="#484848" stroke-width="1.400"/></svg>
<svg class="abs" style="left:647.5px;top:94.0px" width="11" height="8" viewBox="0 0 11 8"><path d="M1 1.200l4.500 4.500 4.500-4.500" fill="none" stroke="#484848" stroke-width="1.400"/></svg>
<svg class="abs" style="left:683.5px;top:94.0px" width="11" height="8" viewBox="0 0 11 8"><path d="M1 1.200l4.500 4.500 4.500-4.500" fill="none" stroke="#484848" stroke-width="1.400"/></svg>
<svg class="abs" style="left:719.5px;top:94.0px" width="11" height="8" viewBox="0 0 11 8"><path d="M1 1.200l4.500 4.500 4.500-4.500" fill="none" stroke="#484848" stroke-width="1.400"/></svg>
<svg class="abs" style="left:883.5px;top:94.0px" width="11" height="8" viewBox="0 0 11 8"><path d="M1 1.200l4.500 4.500 4.500-4.500" fill="none" stroke="#484848" stroke-width="1.400"/></svg>
<svg class="abs" style="left:949.0px;top:94.0px" width="11" height="8" viewBox="0 0 11 8"><path d="M1 1.200l4.500 4.500 4.500-4.500" fill="none" stroke="#484848" stroke-width="1.400"/></svg>
<div class="combo" style="left:811px;top:84px;width:43px;height:28px"></div>
<svg class="abs" style="left:815.5px;top:89.0px" width="16" height="16" viewBox="0 0 16 16"><rect x="1.500" y="3.500" width="13" height="9.500" fill="#fff" stroke="#000" stroke-width="1.500"/><path d="M1.500 3.500l13 9.500M14.500 3.500l-13 9.500" stroke="#000" stroke-width="1"/></svg>
<svg class="abs" style="left:836.0px;top:93.0px" width="11" height="8" viewBox="0 0 11 8"><path d="M1 1.200l4.500 4.500 4.500-4.500" fill="none" stroke="#484848" stroke-width="1.400"/></svg>
<div id="cellref">A1</div>
<div id="formula"></div>
<div style="position:absolute;left:158px;top:114.0px;font-size:13.5px;line-height:16px;color:#2e2e2e;white-space:nowrap;letter-spacing:-0.258px;">Name</div>
<div class="abs" style="left:153px;top:120px;width:2px;height:2px;background:#c4c4c4;box-shadow:0 5px 0 #c4c4c4,0 10px 0 #c4c4c4"></div>
<div class="abs" style="left:954px;top:144px;width:12px;height:1px;border-top:1px dotted #c0c0c0"></div>
<div id="pane"></div>
<div id="tab"></div>
<div style="position:absolute;left:9px;top:154.0px;font-size:13.5px;line-height:16px;color:#2e2e2e;white-space:nowrap;letter-spacing:0.078px;">Worksheet</div>
<div class="abs" style="left:1905px;top:176px;width:15px;height:858px;background:#fafafa;border-left:1px solid #e6e6e6"></div>
<div class="abs" style="left:1908px;top:179px;width:6px;height:55px;border-radius:3px;background:#9c9c9c"></div>
<div class="abs" style="left:2px;top:1031px;width:1918px;height:14px;background:#fafafa;border-top:1px solid #ececec;border-left:1px solid #d6d6d6"></div>
<div class="abs" style="left:5px;top:1035px;width:1008px;height:6px;border-radius:3px;background:#b4b4b4"></div>
<div class="abs" style="left:0;top:1045px;width:1920px;height:2px;background:#e4e4e4;border-bottom:1px solid #bdbdbd"></div>
<div id="grid">
<div class="rhbg"></div><div class="corner"></div>
<div class="ch" style="left:83px;width:970px">A</div>
<div class="ch" style="left:1053px;width:273px">B</div>
<div class="ch" style="left:1326px;width:133px">C</div>
<div class="ch" style="left:1459px;width:96px">D</div>
<div class="ch" style="left:1555px;width:96px">E</div>
<div class="ch" style="left:1651px;width:96px">F</div>
<div class="ch" style="left:1747px;width:96px">G</div>
<div class="ch" style="left:1843px;width:96px">H</div>
<div class="rh" style="top:199px">1</div>
<div class="row b" style="top:199px">
<span class="c" style="left:82px;width:970px">Name</span>
<span class="c" style="left:1052px;width:273px">Author</span>
<span class="c" style="left:1325px;width:133px">User Rating</span>
<span class="c" style="left:1458px;width:96px">Reviews</span>
<span class="c" style="left:1554px;width:96px">Price</span>
<span class="c" style="left:1650px;width:96px">Year</span>
<span class="c" style="left:1746px;width:96px">Genre</span>
</div>
<div class="rh" style="top:221px">2</div>
<div class="row" style="top:221px">
<span class="c" style="left:82px;width:970px">10-Day Green Smoothie Cleanse</span>
<span class="c" style="left:1052px;width:273px">JJ Smith</span>
<span class="c r" style="left:1325px;width:133px">4,7</span>
<span class="c r" style="left:1458px;width:96px">17350</span>
<span class="c r" style="left:1554px;width:96px">8</span>
<span class="c r" style="left:1650px;width:96px">2016</span>
<span class="c" style="left:1746px;width:96px">Non Fiction</span>
</div>
<div class="rh" style="top:243px">3</div>
<div class="row" style="top:243px">
<span class="c" style="left:82px;width:970px">11/22/63: A Novel</span>
<span class="c" style="left:1052px;width:273px">Stephen King</span>
<span class="c r" style="left:1325px;width:133px">4,6</span>
<span class="c r" style="left:1458px;width:96px">2052</span>
<span class="c r" style="left:1554px;width:96px">22</span>
<span class="c r" style="left:1650px;width:96px">2011</span>
<span class="c" style="left:1746px;width:96px">Fiction</span>
</div>
<div class="rh" style="top:265px">4</div>
<div class="row" style="top:265px">
<span class="c" style="left:82px;width:970px">12 Rules for Life: An Antidote to Chaos</span>
<span class="c" style="left:1052px;width:273px">Jordan B. Peterson</span>
<span class="c r" style="left:1325px;width:133px">4,7</span>
<span class="c r" style="left:1458px;width:96px">18979</span>
<span class="c r" style="left:1554px;width:96px">15</span>
<span class="c r" style="left:1650px;width:96px">2018</span>
<span class="c" style="left:1746px;width:96px">Non Fiction</span>
</div>
<div class="rh" style="top:287px">5</div>
<div class="row" style="top:287px">
<span class="c" style="left:82px;width:970px">1984 (Signet Classics)</span>
<span class="c" style="left:1052px;width:273px">George Orwell</span>
<span class="c r" style="left:1325px;width:133px">4,7</span>
<span class="c r" style="left:1458px;width:96px">21424</span>
<span class="c r" style="left:1554px;width:96px">6</span>
<span class="c r" style="left:1650px;width:96px">2017</span>
<span class="c" style="left:1746px;width:96px">Fiction</span>
</div>
<div class="rh" style="top:309px">6</div>
<div class="row" style="top:309px">
<span class="c" style="left:82px;width:970px">5,000 Awesome Facts (About Everything!) (National Geographic Kids)</span>
<span class="c" style="left:1052px;width:273px">National Geographic Kids</span>
<span class="c r" style="left:1325px;width:133px">4,8</span>
<span class="c r" style="left:1458px;width:96px">7665</span>
<span class="c r" style="left:1554px;width:96px">12</span>
<span class="c r" style="left:1650px;width:96px">2019</span>
<span class="c" style="left:1746px;width:96px">Non Fiction</span>
</div>
<div class="rh" style="top:331px">7</div>
<div class="row" style="top:331px">
<span class="c" style="left:82px;width:970px">A Dance with Dragons (A Song of Ice and Fire)</span>
<span class="c" style="left:1052px;width:273px">George R. R. Martin</span>
<span class="c r" style="left:1325px;width:133px">4,4</span>
<span class="c r" style="left:1458px;width:96px">12643</span>
<span class="c r" style="left:1554px;width:96px">11</span>
<span class="c r" style="left:1650px;width:96px">2011</span>
<span class="c" style="left:1746px;width:96px">Fiction</span>
</div>
<div class="rh" style="top:353px">8</div>
<div class="row" style="top:353px">
<span class="c" style="left:82px;width:970px">A Game of Thrones / A Clash of Kings / A Storm of Swords / A Feast of Crows / A Dance with Dragons</span>
<span class="c" style="left:1052px;width:273px">George R. R. Martin</span>
<span class="c r" style="left:1325px;width:133px">4,7</span>
<span class="c r" style="left:1458px;width:96px">19735</span>
<span class="c r" style="left:1554px;width:96px">30</span>
<span class="c r" style="left:1650px;width:96px">2014</span>
<span class="c" style="left:1746px;width:96px">Fiction</span>
</div>
<div class="rh" style="top:375px">9</div>
<div class="row" style="top:375px">
<span class="c" style="left:82px;width:970px">A Gentleman in Moscow: A Novel</span>
<span class="c" style="left:1052px;width:273px">Amor Towles</span>
<span class="c r" style="left:1325px;width:133px">4,7</span>
<span class="c r" style="left:1458px;width:96px">19699</span>
<span class="c r" style="left:1554px;width:96px">15</span>
<span class="c r" style="left:1650px;width:96px">2017</span>
<span class="c" style="left:1746px;width:96px">Fiction</span>
</div>
<div class="rh" style="top:397px">10</div>
<div class="row" style="top:397px">
<span class="c" style="left:82px;width:970px">A Higher Loyalty: Truth, Lies, and Leadership</span>
<span class="c" style="left:1052px;width:273px">James Comey</span>
<span class="c r" style="left:1325px;width:133px">4,7</span>
<span class="c r" style="left:1458px;width:96px">5983</span>
<span class="c r" style="left:1554px;width:96px">3</span>
<span class="c r" style="left:1650px;width:96px">2018</span>
<span class="c" style="left:1746px;width:96px">Non Fiction</span>
</div>
<div class="rh" style="top:419px">11</div>
<div class="row" style="top:419px">
<span class="c" style="left:82px;width:970px">A Man Called Ove: A Novel</span>
<span class="c" style="left:1052px;width:273px">Fredrik Backman</span>
<span class="c r" style="left:1325px;width:133px">4,6</span>
<span class="c r" style="left:1458px;width:96px">23848</span>
<span class="c r" style="left:1554px;width:96px">8</span>
<span class="c r" style="left:1650px;width:96px">2016</span>
<span class="c" style="left:1746px;width:96px">Fiction</span>
</div>
<div class="rh" style="top:441px">12</div>
<div class="row" style="top:441px">
<span class="c" style="left:82px;width:970px">A Man Called Ove: A Novel</span>
<span class="c" style="left:1052px;width:273px">Fredrik Backman</span>
<span class="c r" style="left:1325px;width:133px">4,6</span>
<span class="c r" style="left:1458px;width:96px">23848</span>
<span class="c r" style="left:1554px;width:96px">8</span>
<span class="c r" style="left:1650px;width:96px">2017</span>
<span class="c" style="left:1746px;width:96px">Fiction</span>
</div>
<div class="rh" style="top:463px">13</div>
<div class="row" style="top:463px">
<span class="c" style="left:82px;width:970px">A Patriot&#x27;s History of the United States: From Columbus&#x27;s Great Discovery to the War on Terror</span>
<span class="c" style="left:1052px;width:273px">Larry Schweikart</span>
<span class="c r" style="left:1325px;width:133px">4,6</span>
<span class="c r" style="left:1458px;width:96px">460</span>
<span class="c r" style="left:1554px;width:96px">2</span>
<span class="c r" style="left:1650px;width:96px">2010</span>
<span class="c" style="left:1746px;width:96px">Non Fiction</span>
</div>
<div class="rh" style="top:485px">14</div>
<div class="row" style="top:485px">
<span class="c" style="left:82px;width:970px">A Stolen Life: A Memoir</span>
<span class="c" style="left:1052px;width:273px">Jaycee Dugard</span>
<span class="c r" style="left:1325px;width:133px">4,6</span>
<span class="c r" style="left:1458px;width:96px">4149</span>
<span class="c r" style="left:1554px;width:96px">32</span>
<span class="c r" style="left:1650px;width:96px">2011</span>
<span class="c" style="left:1746px;width:96px">Non Fiction</span>
</div>
<div class="rh" style="top:507px">15</div>
<div class="row" style="top:507px">
<span class="c" style="left:82px;width:970px">A Wrinkle in Time (Time Quintet)</span>
<span class="c" style="left:1052px;width:273px">Madeleine L&#x27;Engle</span>
<span class="c r" style="left:1325px;width:133px">4,5</span>
<span class="c r" style="left:1458px;width:96px">5153</span>
<span class="c r" style="left:1554px;width:96px">5</span>
<span class="c r" style="left:1650px;width:96px">2018</span>
<span class="c" style="left:1746px;width:96px">Fiction</span>
</div>
<div class="rh" style="top:529px">16</div>
<div class="row" style="top:529px">
<span class="c" style="left:82px;width:970px">Act Like a Lady, Think Like a Man: What Men Really Think About Love, Relationships, Intimacy, and Commitment</span>
<span class="c" style="left:1052px;width:273px">Steve Harvey</span>
<span class="c r" style="left:1325px;width:133px">4,6</span>
<span class="c r" style="left:1458px;width:96px">5013</span>
<span class="c r" style="left:1554px;width:96px">17</span>
<span class="c r" style="left:1650px;width:96px">2009</span>
<span class="c" style="left:1746px;width:96px">Non Fiction</span>
</div>
<div class="rh" style="top:551px">17</div>
<div class="row" style="top:551px">
<span class="c" style="left:82px;width:970px">Adult Coloring Book Designs: Stress Relief Coloring Book: Garden Designs, Mandalas, Animals, and Paisley Patterns</span>
<span class="c" style="left:1052px;width:273px">Adult Coloring Book Designs</span>
<span class="c r" style="left:1325px;width:133px">4,5</span>
<span class="c r" style="left:1458px;width:96px">2313</span>
<span class="c r" style="left:1554px;width:96px">4</span>
<span class="c r" style="left:1650px;width:96px">2016</span>
<span class="c" style="left:1746px;width:96px">Non Fiction</span>
</div>
<div class="rh" style="top:573px">18</div>
<div class="row" style="top:573px">
<span class="c" style="left:82px;width:970px">Adult Coloring Book: Stress Relieving Animal Designs</span>
<span class="c" style="left:1052px;width:273px">Blue Star Coloring</span>
<span class="c r" style="left:1325px;width:133px">4,6</span>
<span class="c r" style="left:1458px;width:96px">2925</span>
<span class="c r" style="left:1554px;width:96px">6</span>
<span class="c r" style="left:1650px;width:96px">2015</span>
<span class="c" style="left:1746px;width:96px">Non Fiction</span>
</div>
<div class="rh" style="top:595px">19</div>
<div class="row" style="top:595px">
<span class="c" style="left:82px;width:970px">Adult Coloring Book: Stress Relieving Patterns</span>
<span class="c" style="left:1052px;width:273px">Blue Star Coloring</span>
<span class="c r" style="left:1325px;width:133px">4,4</span>
<span class="c r" style="left:1458px;width:96px">2951</span>
<span class="c r" style="left:1554px;width:96px">6</span>
<span class="c r" style="left:1650px;width:96px">2015</span>
<span class="c" style="left:1746px;width:96px">Non Fiction</span>
</div>
<div class="rh" style="top:617px">20</div>
<div class="row" style="top:617px">
<span class="c" style="left:82px;width:970px">Adult Coloring Books: A Coloring Book for Adults Featuring Mandalas and Henna Inspired Flowers, Animals, and Paisley Patterns</span>
<span class="c" style="left:1052px;width:273px">Coloring Books for Adults</span>
<span class="c r" style="left:1325px;width:133px">4,5</span>
<span class="c r" style="left:1458px;width:96px">2426</span>
<span class="c r" style="left:1554px;width:96px">8</span>
<span class="c r" style="left:1650px;width:96px">2015</span>
<span class="c" style="left:1746px;width:96px">Non Fiction</span>
</div>
<div class="rh" style="top:639px">21</div>
<div class="row" style="top:639px">
<span class="c" style="left:82px;width:970px">Alexander Hamilton</span>
<span class="c" style="left:1052px;width:273px">Ron Chernow</span>
<span class="c r" style="left:1325px;width:133px">4,8</span>
<span class="c r" style="left:1458px;width:96px">9198</span>
<span class="c r" style="left:1554px;width:96px">13</span>
<span class="c r" style="left:1650px;width:96px">2016</span>
<span class="c" style="left:1746px;width:96px">Non Fiction</span>
</div>
<div class="rh" style="top:661px">22</div>
<div class="row" style="top:661px">
<span class="c" style="left:82px;width:970px">All the Light We Cannot See</span>
<span class="c" style="left:1052px;width:273px">Anthony Doerr</span>
<span class="c r" style="left:1325px;width:133px">4,6</span>
<span class="c r" style="left:1458px;width:96px">36348</span>
<span class="c r" style="left:1554px;width:96px">14</span>
<span class="c r" style="left:1650px;width:96px">2014</span>
<span class="c" style="left:1746px;width:96px">Fiction</span>
</div>
<div class="rh" style="top:683px">23</div>
<div class="row" style="top:683px">
<span class="c" style="left:82px;width:970px">All the Light We Cannot See</span>
<span class="c" style="left:1052px;width:273px">Anthony Doerr</span>
<span class="c r" style="left:1325px;width:133px">4,6</span>
<span class="c r" style="left:1458px;width:96px">36348</span>
<span class="c r" style="left:1554px;width:96px">14</span>
<span class="c r" style="left:1650px;width:96px">2015</span>
<span class="c" style="left:1746px;width:96px">Fiction</span>
</div>
<div class="rh" style="top:705px">24</div>
<div class="row" style="top:705px">
<span class="c" style="left:82px;width:970px">Allegiant</span>
<span class="c" style="left:1052px;width:273px">Veronica Roth</span>
<span class="c r" style="left:1325px;width:133px">3,9</span>
<span class="c r" style="left:1458px;width:96px">6310</span>
<span class="c r" style="left:1554px;width:96px">13</span>
<span class="c r" style="left:1650px;width:96px">2013</span>
<span class="c" style="left:1746px;width:96px">Fiction</span>
</div>
<div class="rh" style="top:727px">25</div>
<div class="row" style="top:727px">
<span class="c" style="left:82px;width:970px">American Sniper: The Autobiography of the Most Lethal Sniper in U.S. Military History</span>
<span class="c" style="left:1052px;width:273px">Chris Kyle</span>
<span class="c r" style="left:1325px;width:133px">4,6</span>
<span class="c r" style="left:1458px;width:96px">15921</span>
<span class="c r" style="left:1554px;width:96px">9</span>
<span class="c r" style="left:1650px;width:96px">2015</span>
<span class="c" style="left:1746px;width:96px">Non Fiction</span>
</div>
<div class="rh" style="top:749px">26</div>
<div class="row" style="top:749px">
<span class="c" style="left:82px;width:970px">And the Mountains Echoed</span>
<span class="c" style="left:1052px;width:273px">Khaled Hosseini</span>
<span class="c r" style="left:1325px;width:133px">4,3</span>
<span class="c r" style="left:1458px;width:96px">12159</span>
<span class="c r" style="left:1554px;width:96px">13</span>
<span class="c r" style="left:1650px;width:96px">2013</span>
<span class="c" style="left:1746px;width:96px">Fiction</span>
</div>
<div class="rh" style="top:771px">27</div>
<div class="row" style="top:771px">
<span class="c" style="left:82px;width:970px">Arguing with Idiots: How to Stop Small Minds and Big Government</span>
<span class="c" style="left:1052px;width:273px">Glenn Beck</span>
<span class="c r" style="left:1325px;width:133px">4,6</span>
<span class="c r" style="left:1458px;width:96px">798</span>
<span class="c r" style="left:1554px;width:96px">5</span>
<span class="c r" style="left:1650px;width:96px">2009</span>
<span class="c" style="left:1746px;width:96px">Non Fiction</span>
</div>
<div class="rh" style="top:793px">28</div>
<div class="row" style="top:793px">
<span class="c" style="left:82px;width:970px">Astrophysics for People in a Hurry</span>
<span class="c" style="left:1052px;width:273px">Neil deGrasse Tyson</span>
<span class="c r" style="left:1325px;width:133px">4,7</span>
<span class="c r" style="left:1458px;width:96px">9374</span>
<span class="c r" style="left:1554px;width:96px">9</span>
<span class="c r" style="left:1650px;width:96px">2017</span>
<span class="c" style="left:1746px;width:96px">Non Fiction</span>
</div>
<div class="rh" style="top:815px">29</div>
<div class="row" style="top:815px">
<span class="c" style="left:82px;width:970px">Autobiography of Mark Twain, Vol. 1</span>
<span class="c" style="left:1052px;width:273px">Mark Twain</span>
<span class="c r" style="left:1325px;width:133px">4,2</span>
<span class="c r" style="left:1458px;width:96px">491</span>
<span class="c r" style="left:1554px;width:96px">14</span>
<span class="c r" style="left:1650px;width:96px">2010</span>
<span class="c" style="left:1746px;width:96px">Non Fiction</span>
</div>
<div class="rh" style="top:837px">30</div>
<div class="row" style="top:837px">
<span class="c" style="left:82px;width:970px">Baby Touch and Feel: Animals</span>
<span class="c" style="left:1052px;width:273px">DK</span>
<span class="c r" style="left:1325px;width:133px">4,6</span>
<span class="c r" style="left:1458px;width:96px">5360</span>
<span class="c r" style="left:1554px;width:96px">5</span>
<span class="c r" style="left:1650px;width:96px">2015</span>
<span class="c" style="left:1746px;width:96px">Non Fiction</span>
</div>
<div class="rh" style="top:859px">31</div>
<div class="row" style="top:859px">
<span class="c" style="left:82px;width:970px">Balance (Angie&#x27;s Extreme Stress Menders)</span>
<span class="c" style="left:1052px;width:273px">Angie Grace</span>
<span class="c r" style="left:1325px;width:133px">4,6</span>
<span class="c r" style="left:1458px;width:96px">1909</span>
<span class="c r" style="left:1554px;width:96px">11</span>
<span class="c r" style="left:1650px;width:96px">2015</span>
<span class="c" style="left:1746px;width:96px">Non Fiction</span>
</div>
<div class="rh" style="top:881px">32</div>
<div class="row" style="top:881px">
<span class="c" style="left:82px;width:970px">Barefoot Contessa Foolproof: Recipes You Can Trust: A Cookbook</span>
<span class="c" style="left:1052px;width:273px">Ina Garten</span>
<span class="c r" style="left:1325px;width:133px">4,8</span>
<span class="c r" style="left:1458px;width:96px">1296</span>
<span class="c r" style="left:1554px;width:96px">24</span>
<span class="c r" style="left:1650px;width:96px">2012</span>
<span class="c" style="left:1746px;width:96px">Non Fiction</span>
</div>
<div class="rh" style="top:903px">33</div>
<div class="row" style="top:903px">
<span class="c" style="left:82px;width:970px">Barefoot Contessa, How Easy Is That?: Fabulous Recipes &amp; Easy Tips</span>
<span class="c" style="left:1052px;width:273px">Ina Garten</span>
<span class="c r" style="left:1325px;width:133px">4,7</span>
<span class="c r" style="left:1458px;width:96px">615</span>
<span class="c r" style="left:1554px;width:96px">21</span>
<span class="c r" style="left:1650px;width:96px">2010</span>
<span class="c" style="left:1746px;width:96px">Non Fiction</span>
</div>
<div class="rh" style="top:925px">34</div>
<div class="row" style="top:925px">
<span class="c" style="left:82px;width:970px">Becoming</span>
<span class="c" style="left:1052px;width:273px">Michelle Obama</span>
<span class="c r" style="left:1325px;width:133px">4,8</span>
<span class="c r" style="left:1458px;width:96px">61133</span>
<span class="c r" style="left:1554px;width:96px">11</span>
<span class="c r" style="left:1650px;width:96px">2018</span>
<span class="c" style="left:1746px;width:96px">Non Fiction</span>
</div>
<div class="rh" style="top:947px">35</div>
<div class="row" style="top:947px">
<span class="c" style="left:82px;width:970px">Becoming</span>
<span class="c" style="left:1052px;width:273px">Michelle Obama</span>
<span class="c r" style="left:1325px;width:133px">4,8</span>
<span class="c r" style="left:1458px;width:96px">61133</span>
<span class="c r" style="left:1554px;width:96px">11</span>
<span class="c r" style="left:1650px;width:96px">2019</span>
<span class="c" style="left:1746px;width:96px">Non Fiction</span>
</div>
<div class="rh" style="top:969px">36</div>
<div class="row" style="top:969px">
<span class="c" style="left:82px;width:970px">Being Mortal: Medicine and What Matters in the End</span>
<span class="c" style="left:1052px;width:273px">Atul Gawande</span>
<span class="c r" style="left:1325px;width:133px">4,8</span>
<span class="c r" style="left:1458px;width:96px">11113</span>
<span class="c r" style="left:1554px;width:96px">15</span>
<span class="c r" style="left:1650px;width:96px">2015</span>
<span class="c" style="left:1746px;width:96px">Non Fiction</span>
</div>
<div class="rh" style="top:991px">37</div>
<div class="row" style="top:991px">
<span class="c" style="left:82px;width:970px">Between the World and Me</span>
<span class="c" style="left:1052px;width:273px">Ta-Nehisi Coates</span>
<span class="c r" style="left:1325px;width:133px">4,7</span>
<span class="c r" style="left:1458px;width:96px">10070</span>
<span class="c r" style="left:1554px;width:96px">13</span>
<span class="c r" style="left:1650px;width:96px">2015</span>
<span class="c" style="left:1746px;width:96px">Non Fiction</span>
</div>
<div class="rh" style="top:1013px">38</div>
<div class="row" style="top:1013px">
<span class="c" style="left:82px;width:970px">Between the World and Me</span>
<span class="c" style="left:1052px;width:273px">Ta-Nehisi Coates</span>
<span class="c r" style="left:1325px;width:133px">4,7</span>
<span class="c r" style="left:1458px;width:96px">10070</span>
<span class="c r" style="left:1554px;width:96px">13</span>
<span class="c r" style="left:1650px;width:96px">2016</span>
<span class="c" style="left:1746px;width:96px">Non Fiction</span>
</div>
<div class="vl" style="left:1052px"></div>
<div class="vl" style="left:1325px"></div>
<div class="vl" style="left:1458px"></div>
<div class="vl" style="left:1554px"></div>
<div class="vl" style="left:1650px"></div>
<div class="vl" style="left:1746px"></div>
<div class="vl" style="left:1842px"></div>
<div class="vl" style="left:1904px"></div>
<div class="sel"></div>
</div>
<div class="win" id="cw" style="left:737px;top:455px;width:723px;height:530px"><div class="wtitle"></div></div>
<div id="cwc">
<div style="position:absolute;left:996px;top:464.5px;font-size:13.33px;line-height:16px;color:#2b2b2b;white-space:nowrap;font-weight:bold;letter-spacing:-0.038px;">Frequency Distribution</div>
<svg class="abs" style="left:754px;top:468px" width="12" height="8" viewBox="0 0 12 8"><path d="M1.500 1.500l4.500 4 4.500-4" fill="none" stroke="#4a4a4a" stroke-width="1.200"/></svg>
<div class="abs" style="left:1373px;top:476px;width:8px;height:1px;background:#3a3a3a"></div>
<div class="abs" style="left:1405px;top:468px;width:8px;height:8px;border:1px solid #3a3a3a"></div>
<svg class="abs" style="left:1431px;top:462px" width="20" height="20" viewBox="0 0 20 20"><circle cx="10" cy="10" r="9.300" fill="#1f9ede"/><path d="M6 6l8 8M14 6l-8 8" stroke="#fff" stroke-width="1.100"/></svg>
<div class="abs" style="left:738px;top:490px;width:721px;height:454px;background:#000"></div>
<div class="btn" style="left:1027px;top:953px;width:73px;height:21px"></div>
<div style="position:absolute;left:1030px;top:955.5px;font-size:13.33px;line-height:16px;color:#2e2e2e;white-space:nowrap;letter-spacing:-0.400px;">Save Image</div>
<div class="btn" style="left:1130px;top:953px;width:77px;height:21px"><div class="abs" style="left:3px;top:4px;width:69px;height:11px;border:1px solid #dcdcdc"></div></div>
<div style="position:absolute;left:1154px;top:955.5px;font-size:13.33px;line-height:16px;color:#2e2e2e;white-space:nowrap;letter-spacing:0.319px;">Print</div>
<div class="btn" style="left:1236px;top:953px;width:73px;height:21px"></div>
<div style="position:absolute;left:1252px;top:955.5px;font-size:13.33px;line-height:16px;color:#2e2e2e;white-space:nowrap;letter-spacing:0.003px;">Return</div>
<svg id="chart" width="719" height="452" viewBox="739 491 719 452" shape-rendering="crispEdges"><rect x="739" y="491" width="719" height="452" fill="#ffff00"/><rect x="800" y="898.50" width="11" height="1" fill="#000"/><rect x="800" y="880.30" width="11" height="1" fill="#000"/><rect x="800" y="862.10" width="11" height="1" fill="#000"/><rect x="800" y="843.90" width="11" height="1" fill="#000"/><rect x="800" y="825.70" width="11" height="1" fill="#000"/><rect x="800" y="807.50" width="11" height="1" fill="#000"/><rect x="800" y="789.30" width="11" height="1" fill="#000"/><rect x="800" y="771.10" width="11" height="1" fill="#000"/><rect x="800" y="752.90" width="11" height="1" fill="#000"/><rect x="800" y="734.70" width="11" height="1" fill="#000"/><rect x="800" y="716.50" width="11" height="1" fill="#000"/><rect x="800" y="698.30" width="11" height="1" fill="#000"/><rect x="800" y="680.10" width="11" height="1" fill="#000"/><rect x="800" y="661.90" width="11" height="1" fill="#000"/><rect x="800" y="643.70" width="11" height="1" fill="#000"/><rect x="800" y="625.50" width="11" height="1" fill="#000"/><rect x="800" y="607.30" width="11" height="1" fill="#000"/><rect x="800" y="589.10" width="11" height="1" fill="#000"/><rect x="800" y="570.90" width="11" height="1" fill="#000"/><rect x="800" y="552.70" width="11" height="1" fill="#000"/><rect x="800" y="534.50" width="11" height="1" fill="#000"/><rect x="812.25" y="815.00" width="3.75" height="84.00" fill="#000" shape-rendering="auto"/><rect x="813.20" y="816.00" width="1.35" height="83.00" fill="#ff0000" shape-rendering="auto"/><rect x="817.25" y="892.00" width="3.75" height="7.00" fill="#000" shape-rendering="auto"/><rect x="818.20" y="893.00" width="1.35" height="6.00" fill="#0000ff" shape-rendering="auto"/><rect x="822.25" y="864.00" width="3.75" height="35.00" fill="#000" shape-rendering="auto"/><rect x="823.20" y="865.00" width="1.35" height="34.00" fill="#008000" shape-rendering="auto"/><rect x="827.25" y="892.00" width="3.75" height="7.00" fill="#000" shape-rendering="auto"/><rect x="828.20" y="893.00" width="1.35" height="6.00" fill="#000080" shape-rendering="auto"/><rect x="832.25" y="675.00" width="3.75" height="224.00" fill="#000" shape-rendering="auto"/><rect x="833.20" y="676.00" width="1.35" height="223.00" fill="#008080" shape-rendering="auto"/><rect x="837.25" y="647.00" width="3.75" height="252.00" fill="#000" shape-rendering="auto"/><rect x="838.20" y="648.00" width="1.35" height="251.00" fill="#00ffff" shape-rendering="auto"/><rect x="842.25" y="633.00" width="3.75" height="266.00" fill="#000" shape-rendering="auto"/><rect x="843.20" y="634.00" width="1.35" height="265.00" fill="#00ff00" shape-rendering="auto"/><rect x="847.25" y="738.00" width="3.75" height="161.00" fill="#000" shape-rendering="auto"/><rect x="848.20" y="739.00" width="1.35" height="160.00" fill="#ff00ff" shape-rendering="auto"/><rect x="852.25" y="535.00" width="3.75" height="364.00" fill="#000" shape-rendering="auto"/><rect x="853.20" y="536.00" width="1.35" height="363.00" fill="#808080" shape-rendering="auto"/><rect x="857.25" y="633.00" width="3.75" height="266.00" fill="#000" shape-rendering="auto"/><rect x="858.20" y="634.00" width="1.35" height="265.00" fill="#800080" shape-rendering="auto"/><rect x="862.25" y="703.00" width="3.75" height="196.00" fill="#000" shape-rendering="auto"/><rect x="863.20" y="704.00" width="1.35" height="195.00" fill="#808000" shape-rendering="auto"/><rect x="867.25" y="654.00" width="3.75" height="245.00" fill="#000" shape-rendering="auto"/><rect x="868.20" y="655.00" width="1.35" height="244.00" fill="#800000" shape-rendering="auto"/><rect x="872.25" y="710.00" width="3.75" height="189.00" fill="#000" shape-rendering="auto"/><rect x="873.20" y="711.00" width="1.35" height="188.00" fill="#ff0000" shape-rendering="auto"/><rect x="877.25" y="696.00" width="3.75" height="203.00" fill="#000" shape-rendering="auto"/><rect x="878.20" y="697.00" width="1.35" height="202.00" fill="#0000ff" shape-rendering="auto"/><rect x="882.25" y="689.00" width="3.75" height="210.00" fill="#000" shape-rendering="auto"/><rect x="883.20" y="690.00" width="1.35" height="209.00" fill="#008000" shape-rendering="auto"/><rect x="887.25" y="752.00" width="3.75" height="147.00" fill="#000" shape-rendering="auto"/><rect x="888.20" y="753.00" width="1.35" height="146.00" fill="#000080" shape-rendering="auto"/><rect x="892.25" y="759.00" width="3.75" height="140.00" fill="#000" shape-rendering="auto"/><rect x="893.20" y="760.00" width="1.35" height="139.00" fill="#008080" shape-rendering="auto"/><rect x="897.25" y="766.00" width="3.75" height="133.00" fill="#000" shape-rendering="auto"/><rect x="898.20" y="767.00" width="1.35" height="132.00" fill="#00ffff" shape-rendering="auto"/><rect x="902.25" y="801.00" width="3.75" height="98.00" fill="#000" shape-rendering="auto"/><rect x="903.20" y="802.00" width="1.35" height="97.00" fill="#00ff00" shape-rendering="auto"/><rect x="907.25" y="871.00" width="3.75" height="28.00" fill="#000" shape-rendering="auto"/><rect x="908.20" y="872.00" width="1.35" height="27.00" fill="#ff00ff" shape-rendering="auto"/><rect x="912.25" y="780.00" width="3.75" height="119.00" fill="#000" shape-rendering="auto"/><rect x="913.20" y="781.00" width="1.35" height="118.00" fill="#808080" shape-rendering="auto"/><rect x="917.25" y="836.00" width="3.75" height="63.00" fill="#000" shape-rendering="auto"/><rect x="918.20" y="837.00" width="1.35" height="62.00" fill="#800080" shape-rendering="auto"/><rect x="922.25" y="857.00" width="3.75" height="42.00" fill="#000" shape-rendering="auto"/><rect x="923.20" y="858.00" width="1.35" height="41.00" fill="#808000" shape-rendering="auto"/><rect x="927.25" y="864.00" width="3.75" height="35.00" fill="#000" shape-rendering="auto"/><rect x="928.20" y="865.00" width="1.35" height="34.00" fill="#800000" shape-rendering="auto"/><rect x="932.25" y="864.00" width="3.75" height="35.00" fill="#000" shape-rendering="auto"/><rect x="933.20" y="865.00" width="1.35" height="34.00" fill="#ff0000" shape-rendering="auto"/><rect x="937.25" y="885.00" width="3.75" height="14.00" fill="#000" shape-rendering="auto"/><rect x="938.20" y="886.00" width="1.35" height="13.00" fill="#0000ff" shape-rendering="auto"/><rect x="947.25" y="871.00" width="3.75" height="28.00" fill="#000" shape-rendering="auto"/><rect x="948.20" y="872.00" width="1.35" height="27.00" fill="#000080" shape-rendering="auto"/><rect x="952.25" y="857.00" width="3.75" height="42.00" fill="#000" shape-rendering="auto"/><rect x="953.20" y="858.00" width="1.35" height="41.00" fill="#008080" shape-rendering="auto"/><rect x="962.25" y="864.00" width="3.75" height="35.00" fill="#000" shape-rendering="auto"/><rect x="963.20" y="865.00" width="1.35" height="34.00" fill="#00ff00" shape-rendering="auto"/><rect x="972.25" y="885.00" width="3.75" height="14.00" fill="#000" shape-rendering="auto"/><rect x="973.20" y="886.00" width="1.35" height="13.00" fill="#808080" shape-rendering="auto"/><rect x="992.25" y="892.00" width="3.75" height="7.00" fill="#000" shape-rendering="auto"/><rect x="993.20" y="893.00" width="1.35" height="6.00" fill="#ff0000" shape-rendering="auto"/><rect x="1007.25" y="892.00" width="3.75" height="7.00" fill="#000" shape-rendering="auto"/><rect x="1008.20" y="893.00" width="1.35" height="6.00" fill="#000080" shape-rendering="auto"/><rect x="1012.25" y="864.00" width="3.75" height="35.00" fill="#000" shape-rendering="auto"/><rect x="1013.20" y="865.00" width="1.35" height="34.00" fill="#008080" shape-rendering="auto"/><rect x="1022.25" y="892.00" width="3.75" height="7.00" fill="#000" shape-rendering="auto"/><rect x="1023.20" y="893.00" width="1.35" height="6.00" fill="#00ff00" shape-rendering="auto"/><rect x="1042.25" y="829.00" width="3.75" height="70.00" fill="#000" shape-rendering="auto"/><rect x="1043.20" y="830.00" width="1.35" height="69.00" fill="#808000" shape-rendering="auto"/><rect x="1072.25" y="892.00" width="3.75" height="7.00" fill="#000" shape-rendering="auto"/><rect x="1073.20" y="893.00" width="1.35" height="6.00" fill="#008080" shape-rendering="auto"/><rect x="1077.25" y="892.00" width="3.75" height="7.00" fill="#000" shape-rendering="auto"/><rect x="1078.20" y="893.00" width="1.35" height="6.00" fill="#00ffff" shape-rendering="auto"/><rect x="1082.25" y="892.00" width="3.75" height="7.00" fill="#000" shape-rendering="auto"/><rect x="1083.20" y="893.00" width="1.35" height="6.00" fill="#00ff00" shape-rendering="auto"/><rect x="1222.25" y="892.00" width="3.75" height="7.00" fill="#000" shape-rendering="auto"/><rect x="1223.20" y="893.00" width="1.35" height="6.00" fill="#808000" shape-rendering="auto"/><rect x="1337.25" y="885.00" width="3.75" height="14.00" fill="#000" shape-rendering="auto"/><rect x="1338.20" y="886.00" width="1.35" height="13.00" fill="#800080" shape-rendering="auto"/><rect x="810" y="535.5" width="2.4" height="364" fill="#000"/><rect x="800" y="898.6" width="587" height="1.3" fill="#000"/><rect x="813" y="899.5" width="1" height="4.3" fill="#000"/><rect x="818" y="899.5" width="1" height="4.3" fill="#000"/><rect x="823" y="899.5" width="1" height="4.3" fill="#000"/><rect x="828" y="899.5" width="1" height="4.3" fill="#000"/><rect x="833" y="899.5" width="1" height="4.3" fill="#000"/><rect x="838" y="899.5" width="1" height="4.3" fill="#000"/><rect x="843" y="899.5" width="1" height="4.3" fill="#000"/><rect x="848" y="899.5" width="1" height="4.3" fill="#000"/><rect x="853" y="899.5" width="1" height="4.3" fill="#000"/><rect x="858" y="899.5" width="1" height="4.3" fill="#000"/><rect x="863" y="899.5" width="1" height="4.3" fill="#000"/><rect x="868" y="899.5" width="1" height="4.3" fill="#000"/><rect x="873" y="899.5" width="1" height="4.3" fill="#000"/><rect x="878" y="899.5" width="1" height="4.3" fill="#000"/><rect x="883" y="899.5" width="1" height="4.3" fill="#000"/><rect x="888" y="899.5" width="1" height="4.3" fill="#000"/><rect x="893" y="899.5" width="1" height="4.3" fill="#000"/><rect x="898" y="899.5" width="1" height="4.3" fill="#000"/><rect x="903" y="899.5" width="1" height="4.3" fill="#000"/><rect x="908" y="899.5" width="1" height="4.3" fill="#000"/><rect x="913" y="899.5" width="1" height="4.3" fill="#000"/><rect x="918" y="899.5" width="1" height="4.3" fill="#000"/><rect x="923" y="899.5" width="1" height="4.3" fill="#000"/><rect x="928" y="899.5" width="1" height="4.3" fill="#000"/><rect x="933" y="899.5" width="1" height="4.3" fill="#000"/><rect x="938" y="899.5" width="1" height="4.3" fill="#000"/><rect x="943" y="899.5" width="1" height="4.3" fill="#000"/><rect x="948" y="899.5" width="1" height="4.3" fill="#000"/><rect x="953" y="899.5" width="1" height="4.3" fill="#000"/><rect x="958" y="899.5" width="1" height="4.3" fill="#000"/><rect x="963" y="899.5" width="1" height="4.3" fill="#000"/><rect x="968" y="899.5" width="1" height="4.3" fill="#000"/><rect x="973" y="899.5" width="1" height="4.3" fill="#000"/><rect x="978" y="899.5" width="1" height="4.3" fill="#000"/><rect x="983" y="899.5" width="1" height="4.3" fill="#000"/><rect x="988" y="899.5" width="1" height="4.3" fill="#000"/><rect x="993" y="899.5" width="1" height="4.3" fill="#000"/><rect x="998" y="899.5" width="1" height="4.3" fill="#000"/><rect x="1003" y="899.5" width="1" height="4.3" fill="#000"/><rect x="1008" y="899.5" width="1" height="4.3" fill="#000"/><rect x="1013" y="899.5" width="1" height="4.3" fill="#000"/><rect x="1018" y="899.5" width="1" height="4.3" fill="#000"/><rect x="1023" y="899.5" width="1" height="4.3" fill="#000"/><rect x="1028" y="899.5" width="1" height="4.3" fill="#000"/><rect x="1033" y="899.5" width="1" height="4.3" fill="#000"/><rect x="1038" y="899.5" width="1" height="4.3" fill="#000"/><rect x="1043" y="899.5" width="1" height="4.3" fill="#000"/><rect x="1048" y="899.5" width="1" height="4.3" fill="#000"/><rect x="1053" y="899.5" width="1" height="4.3" fill="#000"/><rect x="1058" y="899.5" width="1" height="4.3" fill="#000"/><rect x="1063" y="899.5" width="1" height="4.3" fill="#000"/><rect x="1068" y="899.5" width="1" height="4.3" fill="#000"/><rect x="1073" y="899.5" width="1" height="4.3" fill="#000"/><rect x="1078" y="899.5" width="1" height="4.3" fill="#000"/><rect x="1083" y="899.5" width="1" height="4.3" fill="#000"/><rect x="1088" y="899.5" width="1" height="4.3" fill="#000"/><rect x="1093" y="899.5" width="1" height="4.3" fill="#000"/><rect x="1098" y="899.5" width="1" height="4.3" fill="#000"/><rect x="1103" y="899.5" width="1" height="4.3" fill="#000"/><rect x="1108" y="899.5" width="1" height="4.3" fill="#000"/><rect x="1113" y="899.5" width="1" height="4.3" fill="#000"/><rect x="1118" y="899.5" width="1" height="4.3" fill="#000"/><rect x="1123" y="899.5" width="1" height="4.3" fill="#000"/><rect x="1128" y="899.5" width="1" height="4.3" fill="#000"/><rect x="1133" y="899.5" width="1" height="4.3" fill="#000"/><rect x="1138" y="899.5" width="1" height="4.3" fill="#000"/><rect x="1143" y="899.5" width="1" height="4.3" fill="#000"/><rect x="1148" y="899.5" width="1" height="4.3" fill="#000"/><rect x="1153" y="899.5" width="1" height="4.3" fill="#000"/><rect x="1158" y="899.5" width="1" height="4.3" fill="#000"/><rect x="1163" y="899.5" width="1" height="4.3" fill="#000"/><rect x="1168" y="899.5" width="1" height="4.3" fill="#000"/><rect x="1173" y="899.5" width="1" height="4.3" fill="#000"/><rect x="1178" y="899.5" width="1" height="4.3" fill="#000"/><rect x="1183" y="899.5" width="1" height="4.3" fill="#000"/><rect x="1188" y="899.5" width="1" height="4.3" fill="#000"/><rect x="1193" y="899.5" width="1" height="4.3" fill="#000"/><rect x="1198" y="899.5" width="1" height="4.3" fill="#000"/><rect x="1203" y="899.5" width="1" height="4.3" fill="#000"/><rect x="1208" y="899.5" width="1" height="4.3" fill="#000"/><rect x="1213" y="899.5" width="1" height="4.3" fill="#000"/><rect x="1218" y="899.5" width="1" height="4.3" fill="#000"/><rect x="1223" y="899.5" width="1" height="4.3" fill="#000"/><rect x="1228" y="899.5" width="1" height="4.3" fill="#000"/><rect x="1233" y="899.5" width="1" height="4.3" fill="#000"/><rect x="1238" y="899.5" width="1" height="4.3" fill="#000"/><rect x="1243" y="899.5" width="1" height="4.3" fill="#000"/><rect x="1248" y="899.5" width="1" height="4.3" fill="#000"/><rect x="1253" y="899.5" width="1" height="4.3" fill="#000"/><rect x="1258" y="899.5" width="1" height="4.3" fill="#000"/><rect x="1263" y="899.5" width="1" height="4.3" fill="#000"/><rect x="1268" y="899.5" width="1" height="4.3" fill="#000"/><rect x="1273" y="899.5" width="1" height="4.3" fill="#000"/><rect x="1278" y="899.5" width="1" height="4.3" fill="#000"/><rect x="1283" y="899.5" width="1" height="4.3" fill="#000"/><rect x="1288" y="899.5" width="1" height="4.3" fill="#000"/><rect x="1293" y="899.5" width="1" height="4.3" fill="#000"/><rect x="1298" y="899.5" width="1" height="4.3" fill="#000"/><rect x="1303" y="899.5" width="1" height="4.3" fill="#000"/><rect x="1308" y="899.5" width="1" height="4.3" fill="#000"/><rect x="1313" y="899.5" width="1" height="4.3" fill="#000"/><rect x="1318" y="899.5" width="1" height="4.3" fill="#000"/><rect x="1323" y="899.5" width="1" height="4.3" fill="#000"/><rect x="1328" y="899.5" width="1" height="4.3" fill="#000"/><rect x="1333" y="899.5" width="1" height="4.3" fill="#000"/><rect x="1338" y="899.5" width="1" height="4.3" fill="#000"/></svg>
<div class="ct" style="left:1098px;top:491px;letter-spacing:0.2px">Frequency Distribution</div>
<div class="ct" style="left:739px;top:510px">Frequency</div>
<div class="ct yl" style="top:535.0px">52,00</div>
<div class="ct yl" style="top:553.2px">49,40</div>
<div class="ct yl" style="top:571.4px">46,80</div>
<div class="ct yl" style="top:589.6px">44,20</div>
<div class="ct yl" style="top:607.8px">41,60</div>
<div class="ct yl" style="top:626.0px">39,00</div>
<div class="ct yl" style="top:644.2px">36,40</div>
<div class="ct yl" style="top:662.4px">33,80</div>
<div class="ct yl" style="top:680.6px">31,20</div>
<div class="ct yl" style="top:698.8px">28,60</div>
<div class="ct yl" style="top:717.0px">26,00</div>
<div class="ct yl" style="top:735.2px">23,40</div>
<div class="ct yl" style="top:753.4px">20,80</div>
<div class="ct yl" style="top:771.6px">18,20</div>
<div class="ct yl" style="top:789.8px">15,60</div>
<div class="ct yl" style="top:808.0px">13,00</div>
<div class="ct yl" style="top:826.2px">10,40</div>
<div class="ct yl" style="top:844.4px">7,80</div>
<div class="ct yl" style="top:862.6px">5,20</div>
<div class="ct yl" style="top:880.8px">2,60</div>
<div class="ct yl" style="top:899.0px">0,00</div>
<div class="ct xl" style="left:800.6px">0</div>
<div class="ct xl" style="left:825.8px">5</div>
<div class="ct xl" style="left:853.5px">11</div>
<div class="ct xl" style="left:884px">17</div>
<div class="ct xl" style="left:914px">23</div>
<div class="ct xl" style="left:944px">29</div>
<div class="ct xl" style="left:974px">35</div>
<div class="ct xl" style="left:1004px">41</div>
<div class="ct xl" style="left:1034px">47</div>
<div class="ct xl" style="left:1064px">53</div>
<div class="ct xl" style="left:1094px">59</div>
<div class="ct xl" style="left:1124px">65</div>
<div class="ct xl" style="left:1154px">71</div>
<div class="ct xl" style="left:1184px">77</div>
<div class="ct xl" style="left:1214px">83</div>
<div class="ct xl" style="left:1244px">89</div>
<div class="ct xl" style="left:1274px">95</div>
<div class="ct xl" style="left:1307.5px">102</div>
<div class="ct" style="left:1054px;top:925px">Values of Price</div>
</div>
<div class="win" id="gd" style="left:243px;top:546px;width:463px;height:448px"><div class="wtitle" style="background:#ebebeb"></div></div>
<div style="position:absolute;left:364px;top:555.5px;font-size:13.33px;line-height:16px;color:#a3a3a3;white-space:nowrap;font-weight:bold;letter-spacing:-0.377px;">Group Frequency Analysis</div>
<svg class="abs" style="left:260px;top:559px" width="12" height="8" viewBox="0 0 12 8"><path d="M1.500 1.500l4.500 4 4.500-4" fill="none" stroke="#c8c8c8" stroke-width="1.200"/></svg>
<div class="abs" style="left:619px;top:566px;width:8px;height:1px;background:#c8c8c8"></div>
<div class="abs" style="left:651px;top:559px;width:8px;height:8px;border:1px solid #cdcdcd"></div>
<svg class="abs" style="left:677px;top:553px" width="20" height="20" viewBox="0 0 20 20"><circle cx="10" cy="10" r="9" fill="#b4b4b4"/><path d="M6.500 6.500l7 7M13.500 6.500l-7 7" stroke="#fff" stroke-width="1.300"/></svg>
<div style="position:absolute;left:260px;top:589.5px;font-size:13.33px;line-height:16px;color:#2e2e2e;white-space:nowrap;letter-spacing:0.058px;">Available Variables:</div>
<div class="abs" style="left:260px;top:605px;width:181px;height:255px;background:#fff;border:1px solid #dedede"></div>
<div style="position:absolute;left:266px;top:611.5px;font-size:13.33px;line-height:16px;color:#2e2e2e;white-space:nowrap;letter-spacing:-0.137px;">Name</div>
<div style="position:absolute;left:266px;top:637.5px;font-size:13.33px;line-height:16px;color:#2e2e2e;white-space:nowrap;letter-spacing:0.600px;">Author</div>
<div style="position:absolute;left:266px;top:663.5px;font-size:13.33px;line-height:16px;color:#2e2e2e;white-space:nowrap;letter-spacing:-0.124px;">User Rating</div>
<div style="position:absolute;left:266px;top:689.5px;font-size:13.33px;line-height:16px;color:#2e2e2e;white-space:nowrap;letter-spacing:-0.339px;">Reviews</div>
<div style="position:absolute;left:266px;top:715.5px;font-size:13.33px;line-height:16px;color:#2e2e2e;white-space:nowrap;letter-spacing:-0.230px;">Year</div>
<div style="position:absolute;left:266px;top:741.5px;font-size:13.33px;line-height:16px;color:#2e2e2e;white-space:nowrap;letter-spacing:-0.203px;">Genre</div>
<div class="abs" style="left:455px;top:605px;width:230px;height:130px;background:#fff;border:1px solid #e4e4e4"></div>
<div style="position:absolute;left:456px;top:606.5px;font-size:13.33px;line-height:16px;color:#2e2e2e;white-space:nowrap;letter-spacing:0.190px;white-space:pre;">This procedure plots the frequency of</div>
<div style="position:absolute;left:456px;top:622.5px;font-size:13.33px;line-height:16px;color:#2e2e2e;white-space:nowrap;letter-spacing:0.002px;white-space:pre;">cases in each of the groups in a group</div>
<div style="position:absolute;left:456px;top:638.5px;font-size:13.33px;line-height:16px;color:#2e2e2e;white-space:nowrap;letter-spacing:0.122px;white-space:pre;">variable.  The group variable should</div>
<div style="position:absolute;left:456px;top:654.5px;font-size:13.33px;line-height:16px;color:#2e2e2e;white-space:nowrap;letter-spacing:0.058px;white-space:pre;">be defined as an integer variable.</div>
<div style="position:absolute;left:456px;top:686.5px;font-size:13.33px;line-height:16px;color:#2e2e2e;white-space:nowrap;letter-spacing:0.154px;white-space:pre;">Select the variable and type of plot</div>
<div style="position:absolute;left:456px;top:702.5px;font-size:13.33px;line-height:16px;color:#2e2e2e;white-space:nowrap;letter-spacing:0.224px;white-space:pre;">and click the Compute button for</div>
<div style="position:absolute;left:456px;top:718.5px;font-size:13.33px;line-height:16px;color:#2e2e2e;white-space:nowrap;letter-spacing:0.151px;white-space:pre;">the results.</div>
<div style="position:absolute;left:500px;top:789.5px;font-size:13.33px;line-height:16px;color:#2e2e2e;white-space:nowrap;letter-spacing:0.098px;">Group Variable</div>
<div class="abs" style="left:499px;top:805px;width:139px;height:28px;background:#fff;border:1px solid #d2d2d2;border-radius:3px"></div>
<div style="position:absolute;left:507px;top:811.5px;font-size:13.33px;line-height:16px;color:#2e2e2e;white-space:nowrap;letter-spacing:-0.275px;">Price</div>
<div class="btn" style="left:456px;top:813px;width:28px;height:26px"></div>
<svg class="abs" style="left:462px;top:821px" width="16" height="10" viewBox="0 0 16 10"><path d="M1 5l5-4.500v2.500h9.500v4h-9.500v2.500z" fill="#6cbf5a" stroke="#3f9a3a" stroke-width=".8"/><path d="M6 4.200h9" stroke="#e8f6e0" stroke-width=".8"/></svg>
<div class="abs" style="left:452px;top:836px;width:230px;height:132px;background:#f0f0f0"></div>
<div class="abs" style="left:452px;top:845px;width:229px;height:123px;border:1px solid #e2e2e2;border-radius:2px"></div>
<div style="position:absolute;left:456px;top:837.5px;font-size:13.33px;line-height:16px;color:#2e2e2e;white-space:nowrap;letter-spacing:-0.118px;background:#f0f0f0;padding-right:2px;">Plot Choices:</div>
<div class="radio" style="left:461.500px;top:864.3px"></div>
<div class="abs" style="left:483px;top:863.8px;width:190px;height:16px;overflow:hidden"><div style="position:absolute;left:0px;top:0.0px;font-size:13.33px;line-height:16px;color:#2e2e2e;white-space:nowrap;letter-spacing:0.078px;">Plot means using 2D Horizontal</div></div>
<div class="radio" style="left:461.500px;top:890.0px"></div>
<div class="abs" style="left:483px;top:889.5px;width:190px;height:16px;overflow:hidden"><div style="position:absolute;left:0px;top:0.0px;font-size:13.33px;line-height:16px;color:#2e2e2e;white-space:nowrap;letter-spacing:0.078px;">Plot means using 3D Horizontal</div></div>
<div class="radio" style="left:461.500px;top:915.0px"></div>
<div class="abs" style="left:483px;top:914.5px;width:190px;height:16px;overflow:hidden"><div style="position:absolute;left:0px;top:0.0px;font-size:13.33px;line-height:16px;color:#2e2e2e;white-space:nowrap;letter-spacing:0.05px;">Plot means using 2D Vertical Bar</div></div>
<div class="radio on" style="left:461.500px;top:941.0px"></div>
<div class="abs" style="left:483px;top:940.5px;width:190px;height:16px;overflow:hidden"><div style="position:absolute;left:0px;top:0.0px;font-size:13.33px;line-height:16px;color:#2e2e2e;white-space:nowrap;letter-spacing:0.05px;">Plot means using 3D Vertical Bar</div></div>
<div class="btn" style="left:261px;top:893px;width:87px;height:27px"></div>
<div style="position:absolute;left:288.0px;top:898.5px;font-size:13.33px;line-height:16px;color:#2e2e2e;white-space:nowrap;letter-spacing:-0.362px;">Reset</div>
<div class="btn" style="left:357px;top:893px;width:87px;height:27px"></div>
<div style="position:absolute;left:373.0px;top:898.5px;font-size:13.33px;line-height:16px;color:#2e2e2e;white-space:nowrap;letter-spacing:0.134px;">Compute</div>
<div class="btn" style="left:261px;top:941px;width:87px;height:27px"></div>
<div style="position:absolute;left:285.0px;top:946.5px;font-size:13.33px;line-height:16px;color:#2e2e2e;white-space:nowrap;letter-spacing:-0.400px;">Cancel</div>
<div class="btn" style="left:357px;top:941px;width:87px;height:27px"></div>
<div style="position:absolute;left:380.5px;top:946.5px;font-size:13.33px;line-height:16px;color:#2e2e2e;white-space:nowrap;letter-spacing:0.003px;">Return</div>
<div id="taskbar"></div>
<svg width="0" height="0" style="position:absolute"><defs><radialGradient id="sg"><stop offset="0" stop-color="#fff"/><stop offset=".4" stop-color="#d8eaff" stop-opacity=".95"/><stop offset="1" stop-color="#5aa0f0" stop-opacity="0"/></radialGradient></defs></svg>
<svg class="abs" style="left:3.3px;top:1051.5px" width="25" height="25" viewBox="0 0 25 25"><circle cx="12.500" cy="12.500" r="11.300" fill="none" stroke="#e4e4e4" stroke-width="1.500"/><path d="M6.500 6.500v8a3.500 3.500 0 0 0 3.500 3.500h5a3.500 3.500 0 0 0 3.500-3.500v-5a2 2 0 0 0-4 0v4.500M14.500 9.500a2 2 0 0 0-4 0v4.500" fill="none" stroke="#e4e4e4" stroke-width="1.700"/></svg>
<div class="abs" style="left:38px;top:1056px;width:20px;height:18px;background:#f8c56c;border-bottom:3px solid #e4ab52"></div>
<div class="abs" style="left:67px;top:1053px;width:2px;height:23px;background:#8c8c8c"></div>
<svg class="abs" style="left:78.0px;top:1053.5px" width="20" height="20" viewBox="0 0 20 20"><rect width="20" height="20" rx="3.500" fill="#f4723c"/><circle cx="10" cy="11" r="6.300" fill="#fff"/><circle cx="10.800" cy="11.200" r="3.300" fill="#f4723c"/><path d="M9.500 4.500l3-2.200c0 1.500 1.200 2.300 2.500 2.700l-1.500 1.500z" fill="#fff"/><path d="M11 7.500c2-.5 3.500 1 3.500 2.500l-2.500-.5z" fill="#f4723c"/><path d="M6 8c1 .2 2 .8 2.800 1.800l-1.300 1.200z" fill="#f4723c"/></svg>
<svg class="abs" style="left:109.5px;top:1053.0px" width="21" height="21" viewBox="0 0 21 21"><rect x=".5" y=".5" width="20" height="20" rx="4" fill="#1b1b1b" stroke="#454545"/><text x="2.500" y="8.500" font-family="Liberation Mono,monospace" font-size="7.500" font-weight="bold" fill="#f0f0f0">$</text><rect x="7.500" y="8" width="4" height="1.200" fill="#f0f0f0"/></svg>
<svg class="abs" style="left:142.0px;top:1054.5px" width="20" height="18" viewBox="0 0 20 18"><path d="M0 2a1.500 1.500 0 0 1 1.500-1.500h6l2 2.500h10.500v14h-20z" fill="#e3a94a"/><rect x="2" y="3.500" width="16" height="3" fill="#f4f0e8"/><rect x="0" y="5" width="20" height="13" rx="1" fill="#f7c46c"/><rect x="0" y="16" width="20" height="2" fill="#e2a84e"/></svg>
<div class="abs" style="left:918px;top:1047px;width:51px;height:33px;background:#1f9ede"></div>
<svg class="abs" style="left:171.0px;top:1054.5px" width="16" height="18" viewBox="0 0 16 18"><g opacity=".75"><path d="M3.500 1h9l1.500 2 1.500 2.500-1.500 6.500-6 5-6-5-1.500-6.500 1.500-2.500z" fill="#a84a2a"/><path d="M8 4.500l3-.5 1.500 2-1 2.500 1 1-2.500 2.500-2 1.500-2-1.500-2.500-2.500 1-1-1-2.500 1.500-2z" fill="#c9b4a8"/><path d="M8 7.500l1.500 1.500-1.500 2.500-1.500-2.500z" fill="#a84a2a"/></g></svg>
<div class="tkt" style="left:196px;top:1056px">U...</div>
<svg class="abs" style="left:221.0px;top:1054.5px" width="16" height="18" viewBox="0 0 16 18"><g><path d="M3.500 1h9l1.500 2 1.500 2.500-1.500 6.500-6 5-6-5-1.500-6.500 1.500-2.500z" fill="#fb542b"/><path d="M8 4.500l3-.5 1.500 2-1 2.500 1 1-2.500 2.500-2 1.500-2-1.500-2.500-2.500 1-1-1-2.500 1.500-2z" fill="#fff"/><path d="M8 7.500l1.500 1.500-1.500 2.500-1.500-2.500z" fill="#fb542b"/></g></svg>
<div class="tkt" style="left:246px;top:1056px">(...</div>
<svg class="abs" style="left:270.0px;top:1054.5px" width="16" height="18" viewBox="0 0 16 18"><g><path d="M3.500 1h9l1.500 2 1.500 2.500-1.500 6.500-6 5-6-5-1.500-6.500 1.500-2.500z" fill="#fb542b"/><path d="M8 4.500l3-.5 1.500 2-1 2.500 1 1-2.500 2.500-2 1.500-2-1.500-2.500-2.500 1-1-1-2.500 1.500-2z" fill="#fff"/><path d="M8 7.500l1.500 1.500-1.500 2.500-1.500-2.500z" fill="#fb542b"/></g></svg>
<div class="tkt" style="left:295px;top:1056px">(...</div>
<svg class="abs" style="left:318.0px;top:1052.5px" width="22" height="22" viewBox="0 0 20 20"><path d="M10 10C10.500 6.500 13.500 4 17 5.200C18.200 5.600 18.800 6.500 19 7.200C17 5.800 13.500 6 11.500 10z" fill="#1c58cc" transform="rotate(0.0 10 10)"/><path d="M10.500 9.500C11.200 7 13.500 5.200 16.500 5.600" fill="none" stroke="#4f9af0" stroke-width=".8" stroke-linecap="round" transform="rotate(0.0 10 10)"/><path d="M10 10C10.500 6.500 13.500 4 17 5.200C18.200 5.600 18.800 6.500 19 7.200C17 5.800 13.500 6 11.500 10z" fill="#1c58cc" transform="rotate(51.4 10 10)"/><path d="M10.500 9.500C11.200 7 13.500 5.200 16.500 5.600" fill="none" stroke="#4f9af0" stroke-width=".8" stroke-linecap="round" transform="rotate(51.4 10 10)"/><path d="M10 10C10.500 6.500 13.500 4 17 5.200C18.200 5.600 18.800 6.500 19 7.200C17 5.800 13.500 6 11.500 10z" fill="#1c58cc" transform="rotate(102.9 10 10)"/><path d="M10.500 9.500C11.200 7 13.500 5.200 16.500 5.600" fill="none" stroke="#4f9af0" stroke-width=".8" stroke-linecap="round" transform="rotate(102.9 10 10)"/><path d="M10 10C10.500 6.500 13.500 4 17 5.200C18.200 5.600 18.800 6.500 19 7.200C17 5.800 13.500 6 11.500 10z" fill="#1c58cc" transform="rotate(154.3 10 10)"/><path d="M10.500 9.500C11.200 7 13.500 5.200 16.500 5.600" fill="none" stroke="#4f9af0" stroke-width=".8" stroke-linecap="round" transform="rotate(154.3 10 10)"/><path d="M10 10C10.500 6.500 13.500 4 17 5.200C18.200 5.600 18.800 6.500 19 7.200C17 5.800 13.500 6 11.500 10z" fill="#1c58cc" transform="rotate(205.7 10 10)"/><path d="M10.500 9.500C11.200 7 13.500 5.200 16.500 5.600" fill="none" stroke="#4f9af0" stroke-width=".8" stroke-linecap="round" transform="rotate(205.7 10 10)"/><path d="M10 10C10.500 6.500 13.500 4 17 5.200C18.200 5.600 18.800 6.500 19 7.200C17 5.800 13.500 6 11.500 10z" fill="#1c58cc" transform="rotate(257.1 10 10)"/><path d="M10.500 9.500C11.200 7 13.500 5.200 16.500 5.600" fill="none" stroke="#4f9af0" stroke-width=".8" stroke-linecap="round" transform="rotate(257.1 10 10)"/><path d="M10 10C10.500 6.500 13.500 4 17 5.200C18.200 5.600 18.800 6.500 19 7.200C17 5.800 13.500 6 11.500 10z" fill="#1c58cc" transform="rotate(308.6 10 10)"/><path d="M10.500 9.500C11.200 7 13.500 5.200 16.500 5.600" fill="none" stroke="#4f9af0" stroke-width=".8" stroke-linecap="round" transform="rotate(308.6 10 10)"/><circle cx="10" cy="10" r="6" fill="url(#sg)"/></svg>
<div class="tkt" style="left:346px;top:1056px">C...</div>
<svg class="abs" style="left:371.0px;top:1055.5px" width="16" height="16" viewBox="0 0 16 16"><rect width="16" height="16" rx="3" fill="#f4723c"/><path d="M8 3a5 5 0 1 0 5 4c-.3 2-1.500 3-3 3a2.500 2.500 0 0 1-1.800-4.300c-.8 0-1.500.4-2 1 0-1.500.700-2.800 1.800-3.700z" fill="#fff"/></svg>
<div class="tkt" style="left:396px;top:1056px">A...</div>
<svg class="abs" style="left:421.0px;top:1055.5px" width="16" height="16" viewBox="0 0 16 16"><rect width="16" height="16" rx="3" fill="#2f8a2f"/><rect x="3.500" y="4" width="9" height="8" fill="none" stroke="#7ac87a" stroke-width="1"/><path d="M6.500 4v8M9.500 4v8" stroke="#7ac87a" stroke-width="1"/></svg>
<div class="tkt" style="left:446px;top:1056px">C...</div>
<svg class="abs" style="left:471.0px;top:1055.5px" width="16" height="16" viewBox="0 0 16 16"><rect width="16" height="16" rx="3" fill="#3f8a3a"/><path d="M8 3l4 1.500v3.500c0 2.500-2 4-4 5-2-1-4-2.500-4-5v-3.500z" fill="#9ab89a" stroke="#c8d8c8" stroke-width=".8"/></svg>
<div class="tkt" style="left:496px;top:1056px">U...</div>
<svg class="abs" style="left:522.0px;top:1055.5px" width="16" height="16" viewBox="0 0 16 16"><rect x=".5" y=".5" width="15" height="15" rx="2.500" fill="#1f2a22" stroke="#35453a"/><path d="M2 9h3l1-3 1.500 6 1.500-4 1 1h4" fill="none" stroke="#3fc46a" stroke-width="1"/></svg>
<div class="tkt" style="left:547px;top:1056px">...</div>
<svg class="abs" style="left:570.0px;top:1058.5px" width="16" height="10" viewBox="0 0 16 10"><rect x=".5" y="1" width="15" height="8" fill="#f4f4f4" stroke="#d8d8d8" stroke-width=".6"/><rect x="8" y="3" width="5" height="4.500" fill="#f0e83a"/></svg>
<div class="tkt" style="left:595px;top:1056px">S...</div>
<svg class="abs" style="left:620.5px;top:1055.0px" width="17" height="17" viewBox="0 0 17 17"><rect width="17" height="17" fill="#b8a8b4"/><ellipse cx="8" cy="4" rx="5" ry="1.800" fill="none" stroke="#8a2a7a" stroke-width="1.200"/><path d="M3 6.500c1 1.500 9 1.500 10 0M3 9c1 1.500 9 1.500 10 0" fill="none" stroke="#8a2a7a" stroke-width="1.200"/><path d="M5 14l4-4 3 1 2 3-4 1z" fill="#8a2a7a"/></svg>
<div class="tkt" style="left:646px;top:1056px">...</div>
<svg class="abs" style="left:671.0px;top:1055.5px" width="16" height="16" viewBox="0 0 16 16"><circle cx="8" cy="8" r="7.200" fill="#6a8a9a" stroke="#8a9a9a" stroke-width="1.400"/><path d="M4.500 6l4 3.500M11.500 6l-5 5" stroke="#1f8fd8" stroke-width="1.300"/><path d="M5 10.500l3-2.500" stroke="#3fae4a" stroke-width="1.300"/></svg>
<div class="tkt" style="left:696px;top:1056px">R...</div>
<svg class="abs" style="left:721.0px;top:1055.5px" width="16" height="16" viewBox="0 0 16 16"><circle cx="8" cy="8" r="7.200" fill="#fdfdfd" stroke="#f2f2f2" stroke-width="1.400"/><path d="M4.500 6l4 3.500M11.500 6l-5 5" stroke="#1f8fd8" stroke-width="1.300"/><path d="M5 10.500l3-2.500" stroke="#3fae4a" stroke-width="1.300"/></svg>
<div class="tkt" style="left:746px;top:1056px">B...</div>
<svg class="abs" style="left:771.0px;top:1055.5px" width="16" height="16" viewBox="0 0 16 16"><circle cx="8" cy="8" r="7.800" fill="#b8622a"/><path d="M3 5l3-2 4 1 3 3-1 4-4 2-4-2z" fill="#d89a6a" opacity=".7"/><path d="M5 6l3 1 2-1 1 3-3 3-2-2z" fill="#8a4a1f" opacity=".7"/></svg>
<div class="tkt" style="left:796px;top:1056px">C...</div>
<svg class="abs" style="left:821.0px;top:1055.5px" width="16" height="16" viewBox="0 0 16 16"><rect y="1" width="16" height="14" fill="#3a5ad8"/><rect x="0" y="1" width="16" height="4" fill="#2a3fb8"/><path d="M0 15l4-6 3 3 3-5 6 8z" fill="#f08a3a"/><path d="M4 5l4-2.500 4 2.500v3h-8z" fill="#e8f0ff"/><path d="M0 12l3-3 2 2v4h-5zM16 12l-3-3-2 2v4h5z" fill="#e83a5a"/><circle cx="8" cy="10" r="1.500" fill="#3fd0e8"/></svg>
<div class="tkt" style="left:846px;top:1056px">s...</div>
<svg class="abs" style="left:871.0px;top:1055.5px" width="16" height="16" viewBox="0 0 16 16"><rect y="1" width="16" height="14" fill="#3a5ad8"/><rect x="0" y="1" width="16" height="4" fill="#2a3fb8"/><path d="M0 15l4-6 3 3 3-5 6 8z" fill="#f08a3a"/><path d="M4 5l4-2.500 4 2.500v3h-8z" fill="#e8f0ff"/><path d="M0 12l3-3 2 2v4h-5zM16 12l-3-3-2 2v4h5z" fill="#e83a5a"/><circle cx="8" cy="10" r="1.500" fill="#3fd0e8"/></svg>
<div class="tkt" style="left:896px;top:1056px">G...</div>
<svg class="abs" style="left:921.0px;top:1055.5px" width="16" height="16" viewBox="0 0 16 16"><rect y="1" width="16" height="14" fill="#3a5ad8"/><rect x="0" y="1" width="16" height="4" fill="#2a3fb8"/><path d="M0 15l4-6 3 3 3-5 6 8z" fill="#f08a3a"/><path d="M4 5l4-2.500 4 2.500v3h-8z" fill="#e8f0ff"/><path d="M0 12l3-3 2 2v4h-5zM16 12l-3-3-2 2v4h5z" fill="#e83a5a"/><circle cx="8" cy="10" r="1.500" fill="#3fd0e8"/></svg>
<div class="tkt" style="left:946px;top:1056px">F...</div>
<svg class="abs" style="left:972.5px;top:1056.0px" width="15" height="15" viewBox="0 0 16 16"><rect width="16" height="16" rx="2" fill="#2f9ee0"/><path d="M2 8l12-5.500-2.500 11.500-3.500-3-2 2-.5-3.500 6-5-7 4.500z" fill="#fff"/></svg>
<div class="tkt" style="left:997px;top:1056px">...</div>
<svg class="abs" style="left:1023.5px;top:1057.0px" width="15" height="13" viewBox="0 0 16 14"><path d="M0 1.500a1 1 0 0 1 1-1h5l1.500 2h8.500v11.500h-16z" fill="#f6c266"/><circle cx="8" cy="8.500" r="2.800" fill="#3a3a3a"/><circle cx="8" cy="8.500" r="1.300" fill="#f0b04a"/><rect x="6.500" y="4.500" width="3" height="1.500" fill="#3a3a3a"/></svg>
<div class="tkt" style="left:1047px;top:1056px">S...</div>
<svg class="abs" style="left:1074.0px;top:1055.5px" width="16" height="16" viewBox="0 0 16 16"><rect x=".5" y=".5" width="15" height="15" rx="2.500" fill="#4a567a" stroke="#2f3a5a"/><rect x="3" y="4.500" width="10" height="7" fill="#9aa0aa"/><path d="M3 4.500l5 4 5-4" fill="none" stroke="#6a707a" stroke-width="1"/></svg>
<div class="tkt" style="left:1099px;top:1056px">P...</div>
<svg class="abs" style="left:1124.0px;top:1055.5px" width="18" height="16" viewBox="0 0 18 16"><path d="M1 1.500c3-1.500 13-1.500 16 0-1 3-4 4.500-6 5.500 1 2 0 4-1.500 5.500l1 3-3-3.500c1-1.500 1-2.500 0-3.500-3-1-5.500-3.500-6.500-7z" fill="#3f8fe0"/><path d="M2.500 2.500c3 1 10 1 13 0M5 6c2 .8 5 .8 7.500-.5M8 9.500c1 .3 2 .2 3-.2" fill="none" stroke="#bfe0ff" stroke-width=".9"/></svg>
<div class="tkt" style="left:1150px;top:1056px">...</div>
<svg class="abs" style="left:1175.0px;top:1055.5px" width="18" height="16" viewBox="0 0 18 16"><path d="M1 1.500c3-1.500 13-1.500 16 0-1 3-4 4.500-6 5.500 1 2 0 4-1.500 5.500l1 3-3-3.500c1-1.500 1-2.500 0-3.500-3-1-5.500-3.500-6.500-7z" fill="#3f8fe0"/><path d="M2.500 2.500c3 1 10 1 13 0M5 6c2 .8 5 .8 7.500-.5M8 9.500c1 .3 2 .2 3-.2" fill="none" stroke="#bfe0ff" stroke-width=".9"/></svg>
<div class="tkt" style="left:1201px;top:1056px">O...</div>
<svg class="abs" style="left:1226.0px;top:1055.5px" width="18" height="16" viewBox="0 0 18 16"><path d="M1 1.500c3-1.500 13-1.500 16 0-1 3-4 4.500-6 5.500 1 2 0 4-1.500 5.500l1 3-3-3.500c1-1.500 1-2.500 0-3.500-3-1-5.500-3.500-6.500-7z" fill="#3f8fe0"/><path d="M2.500 2.500c3 1 10 1 13 0M5 6c2 .8 5 .8 7.500-.5M8 9.500c1 .3 2 .2 3-.2" fill="none" stroke="#bfe0ff" stroke-width=".9"/></svg>
<div class="tkt" style="left:1252px;top:1056px">S...</div>
<svg class="abs" style="left:1277.0px;top:1055.5px" width="18" height="16" viewBox="0 0 18 16"><path d="M1 1.500c3-1.500 13-1.500 16 0-1 3-4 4.500-6 5.500 1 2 0 4-1.500 5.500l1 3-3-3.500c1-1.500 1-2.500 0-3.500-3-1-5.500-3.500-6.500-7z" fill="#3f8fe0"/><path d="M2.500 2.500c3 1 10 1 13 0M5 6c2 .8 5 .8 7.500-.5M8 9.500c1 .3 2 .2 3-.2" fill="none" stroke="#bfe0ff" stroke-width=".9"/></svg>
<div class="tkt" style="left:1303px;top:1056px">T...</div>
<svg class="abs" style="left:1329.0px;top:1055.5px" width="16" height="16" viewBox="0 0 16 16"><rect width="16" height="16" rx="3" fill="#6a5a8a"/><path d="M3.500 5h9M3.500 7.500h9M3.500 10h9M3.500 12.500h9" stroke="#7d6fa0" stroke-width="1"/></svg>
<div class="tkt" style="left:1354px;top:1056px">I...</div>
<svg class="abs" style="left:1379.0px;top:1055.5px" width="16" height="16" viewBox="0 0 21 21"><rect x=".5" y=".5" width="20" height="20" rx="4" fill="#1b1b1b" stroke="#454545"/><text x="2.500" y="8.500" font-family="Liberation Mono,monospace" font-size="7.500" font-weight="bold" fill="#f0f0f0">$</text><rect x="7.500" y="8" width="4" height="1.200" fill="#f0f0f0"/></svg>
<div class="tkt" style="left:1404px;top:1056px">T...</div>
<div style="position:absolute;left:1438.5px;top:1056.5px;font-size:13.5px;line-height:16px;color:#4aa8e8;white-space:nowrap;font-weight:bold;letter-spacing:-0.400px;">HR</div>
<svg class="abs" style="left:1460.0px;top:1052.5px" width="22" height="22" viewBox="0 0 20 20"><path d="M10 10C10.500 6.500 13.500 4 17 5.200C18.200 5.600 18.800 6.500 19 7.200C17 5.800 13.500 6 11.500 10z" fill="#1c58cc" transform="rotate(0.0 10 10)"/><path d="M10.500 9.500C11.200 7 13.500 5.200 16.500 5.600" fill="none" stroke="#4f9af0" stroke-width=".8" stroke-linecap="round" transform="rotate(0.0 10 10)"/><path d="M10 10C10.500 6.500 13.500 4 17 5.200C18.200 5.600 18.800 6.500 19 7.200C17 5.800 13.500 6 11.500 10z" fill="#1c58cc" transform="rotate(51.4 10 10)"/><path d="M10.500 9.500C11.200 7 13.500 5.200 16.500 5.600" fill="none" stroke="#4f9af0" stroke-width=".8" stroke-linecap="round" transform="rotate(51.4 10 10)"/><path d="M10 10C10.500 6.500 13.500 4 17 5.200C18.200 5.600 18.800 6.500 19 7.200C17 5.800 13.500 6 11.500 10z" fill="#1c58cc" transform="rotate(102.9 10 10)"/><path d="M10.500 9.500C11.200 7 13.500 5.200 16.500 5.600" fill="none" stroke="#4f9af0" stroke-width=".8" stroke-linecap="round" transform="rotate(102.9 10 10)"/><path d="M10 10C10.500 6.500 13.500 4 17 5.200C18.200 5.600 18.800 6.500 19 7.200C17 5.800 13.500 6 11.500 10z" fill="#1c58cc" transform="rotate(154.3 10 10)"/><path d="M10.500 9.500C11.200 7 13.500 5.200 16.500 5.600" fill="none" stroke="#4f9af0" stroke-width=".8" stroke-linecap="round" transform="rotate(154.3 10 10)"/><path d="M10 10C10.500 6.500 13.500 4 17 5.200C18.200 5.600 18.800 6.500 19 7.200C17 5.800 13.500 6 11.500 10z" fill="#1c58cc" transform="rotate(205.7 10 10)"/><path d="M10.500 9.500C11.200 7 13.500 5.200 16.500 5.600" fill="none" stroke="#4f9af0" stroke-width=".8" stroke-linecap="round" transform="rotate(205.7 10 10)"/><path d="M10 10C10.500 6.500 13.500 4 17 5.200C18.200 5.600 18.800 6.500 19 7.200C17 5.800 13.500 6 11.500 10z" fill="#1c58cc" transform="rotate(257.1 10 10)"/><path d="M10.500 9.500C11.200 7 13.500 5.200 16.500 5.600" fill="none" stroke="#4f9af0" stroke-width=".8" stroke-linecap="round" transform="rotate(257.1 10 10)"/><path d="M10 10C10.500 6.500 13.500 4 17 5.200C18.200 5.600 18.800 6.500 19 7.200C17 5.800 13.500 6 11.500 10z" fill="#1c58cc" transform="rotate(308.6 10 10)"/><path d="M10.500 9.500C11.200 7 13.500 5.200 16.500 5.600" fill="none" stroke="#4f9af0" stroke-width=".8" stroke-linecap="round" transform="rotate(308.6 10 10)"/><circle cx="10" cy="10" r="6" fill="url(#sg)"/></svg>
<svg class="abs" style="left:1480.0px;top:1053.0px" width="24" height="20" viewBox="0 0 24 20"><path d="M1.600 9.900L22 1.750 8.600 12.500z" fill="#dcdcdc"/><path d="M22 1.750L19.750 18 10.400 13.200z" fill="#dcdcdc"/><circle cx="6.300" cy="17.200" r="3" fill="#f2353a"/></svg>
<svg class="abs" style="left:1505.5px;top:1054.5px" width="17" height="18" viewBox="0 0 17 18"><path d="M3.200 4.200h11.600v12.600h-11.600z" fill="none" stroke="#e8e4d8" stroke-width="1.500"/><rect x="5.200" y="2.500" width="1.800" height="2" fill="#e8e4d8"/><rect x="8.200" y="2.500" width="1.800" height="2" fill="#e8e4d8"/><rect x="11.200" y="2.500" width="1.800" height="2" fill="#e8e4d8"/><rect x="1.500" y="6" width="2" height="1.800" fill="#e8e4d8"/><rect x="1.500" y="9" width="2" height="1.800" fill="#e8e4d8"/><rect x="1.500" y="12" width="2" height="1.800" fill="#e8e4d8"/><rect x="5" y="12.800" width="8.500" height="1.800" fill="#e8e4d8"/></svg>
<svg class="abs" style="left:1525.0px;top:1052.5px" width="22" height="22" viewBox="0 0 22 22"><circle cx="11" cy="11" r="10.500" fill="#29a5e8"/><path d="M11 11L18.500 3.500A10.600 10.600 0 0 0 3.600 18.600z" fill="#22b05a"/><path d="M11 11l6.500-8.500 2 2zM11 11l-8.500 6.500 2 2z" fill="#fff"/><circle cx="11" cy="11" r="8" fill="#fff"/><path d="M7 5.200l6.800 3.800-6.800 3.800 2-3.800z" fill="#29a5e8"/><path d="M15.500 9.200l-6.800 3.800 6.800 3.800-2-3.800z" fill="#22b05a"/></svg>
<svg class="abs" style="left:1550.0px;top:1052.5px" width="16" height="22" viewBox="0 0 16 22"><ellipse cx="8" cy="11" rx="7" ry="10" fill="#dcdcdc"/><path d="M4.500 7l7 7-3.500 3.500v-13l3.500 3.500-7 7" fill="none" stroke="#2f2f2f" stroke-width="1.300"/></svg>
<svg class="abs" style="left:1576.0px;top:1052.5px" width="18" height="22" viewBox="0 0 18 22"><path d="M9 1.500c-3.500 0-5.500 2.500-5.500 6v5l-2 3.500h15l-2-3.500v-5c0-3.500-2-6-5.500-6z" fill="#dcdcdc"/><circle cx="9" cy="19" r="2" fill="#dcdcdc"/></svg>
<svg class="abs" style="left:1606.0px;top:1051.5px" width="24" height="24" viewBox="0 0 24 24"><path d="M12 1.500l10 3.500v6c0 6-4.500 9.500-10 12-5.500-2.500-10-6-10-12v-6z" fill="none" stroke="#dcdcdc" stroke-width="2"/><path d="M12 5.500l6.500 2.300v3.700c0 4-3 6.500-6.500 8.200-3.500-1.700-6.500-4.200-6.500-8.200v-3.700z" fill="#dcdcdc"/></svg>
<svg class="abs" style="left:1639.0px;top:1052.5px" width="22" height="22" viewBox="0 0 22 22"><rect x="1" y="1" width="20" height="20" rx="3" fill="none" stroke="#dcdcdc" stroke-width="2"/><path d="M4 18v-9h3v-3h8v3h3v9z" fill="#dcdcdc"/></svg>
<svg class="abs" style="left:1671.0px;top:1051.5px" width="22" height="24" viewBox="0 0 22 24"><path d="M5 3.500h2v-2h6v2h2v13h-4M5 3.500h-2v18h8" fill="none" stroke="#dcdcdc" stroke-width="2"/><rect x="5.500" y="7" width="7" height="11" fill="#dcdcdc"/><path d="M15 12l-4 6h3l-1.500 5 5.500-7h-3.500l2-4z" fill="#8c8c8c"/></svg>
<svg class="abs" style="left:1700.0px;top:1052.5px" width="24" height="22" viewBox="0 0 24 22"><path d="M1 7.500h4.500l6-5.500v18l-6-5.500h-4.500z" fill="#dcdcdc"/><path d="M14.500 7c1.500 1 1.500 7 0 8M17.500 4.500c3 2.500 3 10.500 0 13" fill="none" stroke="#dcdcdc" stroke-width="2"/><path d="M20.500 2c4 4 4 14 0 18" fill="none" stroke="#6a6a6a" stroke-width="2"/></svg>
<div style="position:absolute;left:1748.5px;top:1048.5px;font-size:12.5px;line-height:16px;color:#e0e0e0;white-space:nowrap;font-weight:bold;letter-spacing:-0.194px;">22:28</div>
<div style="position:absolute;left:1733px;top:1063.5px;font-size:12.5px;line-height:16px;color:#e0e0e0;white-space:nowrap;letter-spacing:-0.194px;">2026-03-07</div>
<svg class="abs" style="left:1800.0px;top:1052.5px" width="22" height="22" viewBox="0 0 20 20"><path d="M10 10C10.500 6.500 13.500 4 17 5.200C18.200 5.600 18.800 6.500 19 7.200C17 5.800 13.500 6 11.500 10z" fill="#1c58cc" transform="rotate(0.0 10 10)"/><path d="M10.500 9.500C11.200 7 13.500 5.200 16.500 5.600" fill="none" stroke="#4f9af0" stroke-width=".8" stroke-linecap="round" transform="rotate(0.0 10 10)"/><path d="M10 10C10.500 6.500 13.500 4 17 5.200C18.200 5.600 18.800 6.500 19 7.200C17 5.800 13.500 6 11.500 10z" fill="#1c58cc" transform="rotate(51.4 10 10)"/><path d="M10.500 9.500C11.200 7 13.500 5.200 16.500 5.600" fill="none" stroke="#4f9af0" stroke-width=".8" stroke-linecap="round" transform="rotate(51.4 10 10)"/><path d="M10 10C10.500 6.500 13.500 4 17 5.200C18.200 5.600 18.800 6.500 19 7.200C17 5.800 13.500 6 11.500 10z" fill="#1c58cc" transform="rotate(102.9 10 10)"/><path d="M10.500 9.500C11.200 7 13.500 5.200 16.500 5.600" fill="none" stroke="#4f9af0" stroke-width=".8" stroke-linecap="round" transform="rotate(102.9 10 10)"/><path d="M10 10C10.500 6.500 13.500 4 17 5.200C18.200 5.600 18.800 6.500 19 7.200C17 5.800 13.500 6 11.500 10z" fill="#1c58cc" transform="rotate(154.3 10 10)"/><path d="M10.500 9.500C11.200 7 13.500 5.200 16.500 5.600" fill="none" stroke="#4f9af0" stroke-width=".8" stroke-linecap="round" transform="rotate(154.3 10 10)"/><path d="M10 10C10.500 6.500 13.500 4 17 5.200C18.200 5.600 18.800 6.500 19 7.200C17 5.800 13.500 6 11.500 10z" fill="#1c58cc" transform="rotate(205.7 10 10)"/><path d="M10.500 9.500C11.200 7 13.500 5.200 16.500 5.600" fill="none" stroke="#4f9af0" stroke-width=".8" stroke-linecap="round" transform="rotate(205.7 10 10)"/><path d="M10 10C10.500 6.500 13.500 4 17 5.200C18.200 5.600 18.800 6.500 19 7.200C17 5.800 13.500 6 11.500 10z" fill="#1c58cc" transform="rotate(257.1 10 10)"/><path d="M10.500 9.500C11.200 7 13.500 5.200 16.500 5.600" fill="none" stroke="#4f9af0" stroke-width=".8" stroke-linecap="round" transform="rotate(257.1 10 10)"/><path d="M10 10C10.500 6.500 13.500 4 17 5.200C18.200 5.600 18.800 6.500 19 7.200C17 5.800 13.500 6 11.500 10z" fill="#1c58cc" transform="rotate(308.6 10 10)"/><path d="M10.500 9.500C11.200 7 13.500 5.200 16.500 5.600" fill="none" stroke="#4f9af0" stroke-width=".8" stroke-linecap="round" transform="rotate(308.6 10 10)"/><circle cx="10" cy="10" r="6" fill="url(#sg)"/></svg>
<svg class="abs" style="left:1824.0px;top:1053.0px" width="24" height="20" viewBox="0 0 24 20"><path d="M1.600 9.900L22 1.750 8.600 12.500z" fill="#dcdcdc"/><path d="M22 1.750L19.750 18 10.400 13.200z" fill="#dcdcdc"/><circle cx="6.300" cy="17.200" r="3" fill="#f2353a"/></svg>
<svg class="abs" style="left:1849.0px;top:1052.5px" width="22" height="22" viewBox="0 0 22 22"><circle cx="11" cy="11" r="10.500" fill="#29a5e8"/><path d="M11 11L18.500 3.500A10.600 10.600 0 0 0 3.600 18.600z" fill="#22b05a"/><path d="M11 11l6.500-8.500 2 2zM11 11l-8.500 6.500 2 2z" fill="#fff"/><circle cx="11" cy="11" r="8" fill="#fff"/><path d="M7 5.200l6.800 3.800-6.800 3.800 2-3.800z" fill="#29a5e8"/><path d="M15.500 9.200l-6.800 3.800 6.800 3.800-2-3.800z" fill="#22b05a"/></svg>
<svg class="abs" style="left:1876.0px;top:1052.5px" width="16" height="22" viewBox="0 0 16 22"><ellipse cx="8" cy="11" rx="7" ry="10" fill="#dcdcdc"/><path d="M4.500 7l7 7-3.500 3.500v-13l3.500 3.500-7 7" fill="none" stroke="#2f2f2f" stroke-width="1.300"/></svg>
<svg class="abs" style="left:1899.5px;top:1054.5px" width="17" height="18" viewBox="0 0 17 18"><path d="M3.200 4.200h11.600v12.600h-11.600z" fill="none" stroke="#e8e4d8" stroke-width="1.500"/><rect x="5.200" y="2.500" width="1.800" height="2" fill="#e8e4d8"/><rect x="8.200" y="2.500" width="1.800" height="2" fill="#e8e4d8"/><rect x="11.200" y="2.500" width="1.800" height="2" fill="#e8e4d8"/><rect x="1.500" y="6" width="2" height="1.800" fill="#e8e4d8"/><rect x="1.500" y="9" width="2" height="1.800" fill="#e8e4d8"/><rect x="1.500" y="12" width="2" height="1.800" fill="#e8e4d8"/><rect x="5" y="12.800" width="8.500" height="1.800" fill="#e8e4d8"/></svg>
</div></body></html>
